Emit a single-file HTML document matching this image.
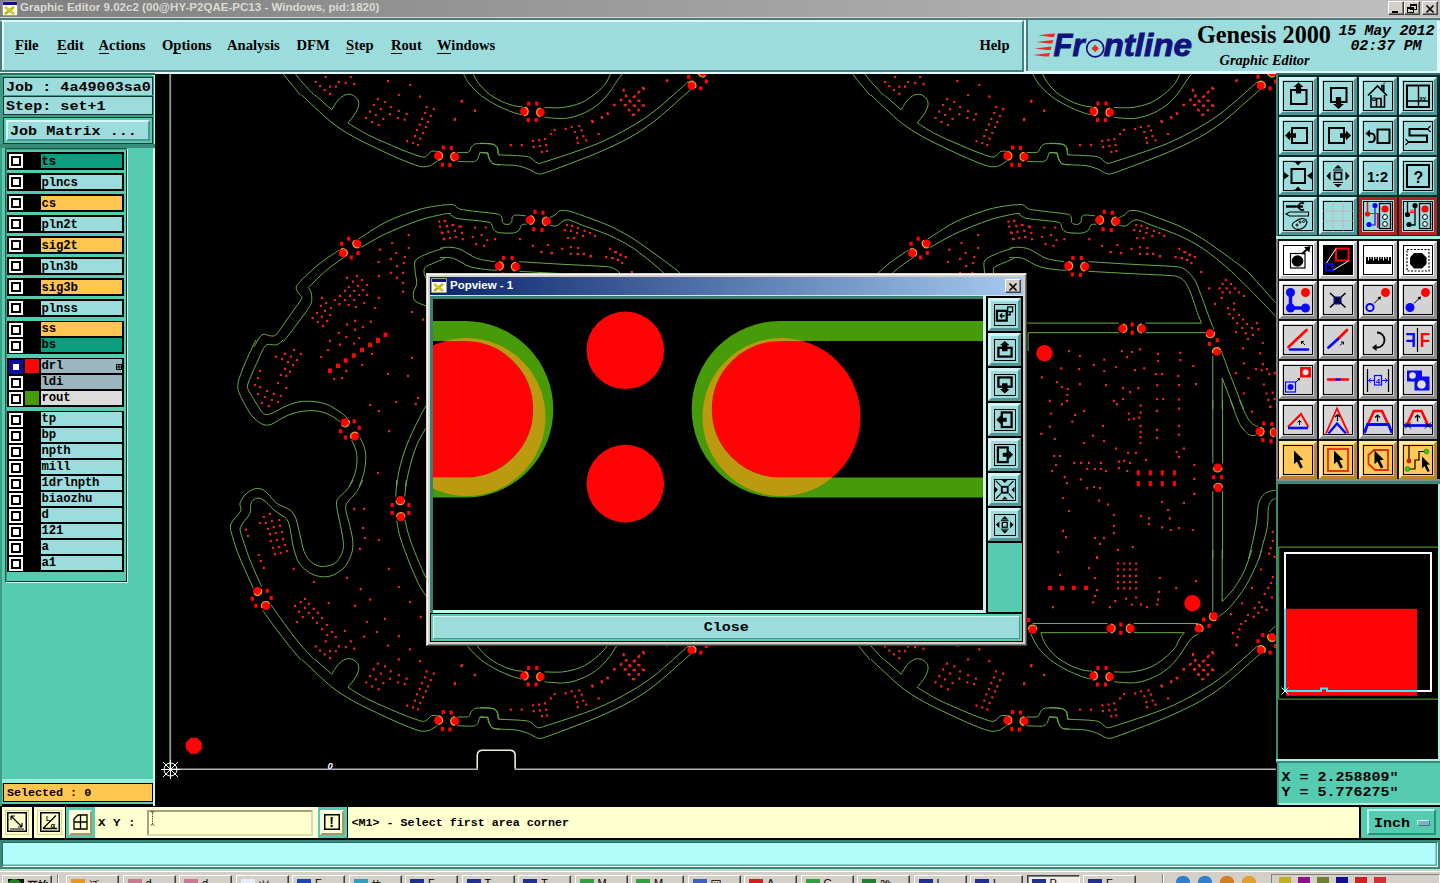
<!DOCTYPE html>
<html><head><meta charset="utf-8"><title>Graphic Editor</title><style>
*{box-sizing:border-box;margin:0;padding:0}
html,body{width:1440px;height:883px;overflow:hidden;background:#000}
body{position:relative;font-family:"Liberation Mono",monospace;font-weight:bold;color:#000}
.a{position:absolute}
.mono{font-family:"Liberation Mono",monospace;font-weight:bold;white-space:pre}
.serif{font-family:"Liberation Serif",serif;font-weight:bold}
#title{left:0;top:0;width:1440px;height:17px;background:linear-gradient(90deg,#808080,#c0c0c0)}
#title span{position:absolute;left:20px;top:1px;font:bold 11.5px "Liberation Sans",sans-serif;color:#dcdad2;white-space:pre;letter-spacing:0.03px}
.wb{position:absolute;top:1px;width:16px;height:14px;background:#d4d0c8;border:1px solid;border-color:#fff #404040 #404040 #fff;box-shadow:inset -1px -1px 0 #808080}
#menu{left:0;top:17px;width:1440px;height:57px;background:#e2fbfb;border-top:1px solid #d6d6d6}
#menu .top{position:absolute;left:0;top:0;width:1440px;height:2px;background:#4a7c7c}
#menu .in{position:absolute;left:0;top:2px;width:1024px;height:52px;background:#9ddcdc;border:2px solid;border-color:#dcf8f8 #4a8080 #4a8080 #dcf8f8;border-left:2px solid #4a7c7c;box-shadow:inset 2px 0 0 #dcf8f8}
.mi{position:absolute;top:36px;font:bold 14.6px "Liberation Serif",serif;white-space:pre}
.mi u{text-decoration:none;border-bottom:1px solid #000;padding-bottom:0}
#logo{left:1026px;top:18px;width:414px;height:53px;background:#9ddcdc}
#left{left:0;top:73px;width:155px;height:731px;background:#55cbb0}
.lbox{position:absolute;left:3px;width:150px;border:1px solid #0a3a30;background:#9ddcdc;box-shadow:0 0 0 1px #3f9c86}
.row{position:absolute;left:7px;width:117px;background:#000}
.cb{position:absolute;left:2px;top:2px;width:14px;height:14px;border:2px solid #fff;background:#000}
.cb i{position:absolute;left:2px;top:2px;width:6px;height:6px;background:#fff}
.lab{position:absolute;left:34px;right:2px;top:1.5px;bottom:1.5px;font:bold 12.3px "Liberation Mono",monospace;padding-left:0.5px;white-space:pre;letter-spacing:-0.15px}
.sw{position:absolute;left:18px;top:1.5px;width:14px;bottom:1.5px}
#rpanel{left:1276px;top:73px;width:164px;height:733px;background:#000}
.tb{position:absolute;width:38px;height:38px}
.tb .f{position:absolute;left:4px;top:4px;width:30px;height:30px;border:1px solid #000}
.tb svg{position:absolute;left:4px;top:4px;width:30px;height:30px}
.t1{background:#9ddcdc;border:3px solid;border-color:#d2f4f4 #4f9494 #4f9494 #d2f4f4}
.t1r{background:#9ddcdc;border:3px solid #b42424}
.t2{background:#fff;border:3px solid;border-color:#fff #b8b8b8 #b8b8b8 #fff}
.t3{background:#d3d3d3;border:3px solid;border-color:#fff #8c8c8c #8c8c8c #fff}
.t4{background:#ffc85a;border:3px solid;border-color:#ffe8a8 #b8862c #b8862c #ffe8a8}
.tb.t1 .f,.tb.t1r .f,.tb.t2 .f,.tb.t3 .f,.tb.t4 .f{left:1px;top:1px}
.tb.t1 svg,.tb.t1r svg,.tb.t2 svg,.tb.t3 svg,.tb.t4 svg{left:1px;top:1px}
#status{left:0;top:806.5px;width:1440px;height:32.5px;background:#000}
.sy{display:inline-block;transform:scaleY(.9);transform-origin:0 78%}
.cream{background:#ffffd0}
#msg{left:0;top:839px;width:1440px;height:30px;background:#3a8a7a}
#task{left:0;top:869px;width:1440px;height:14px;background:#d4d0c8}
.tk{position:absolute;top:5.5px;height:14px;background:#d4d0c8;border:1px solid;border-color:#fff #404040 #404040 #fff;box-shadow:inset -1px -1px 0 #808080;overflow:hidden;font:11px "Liberation Sans","Noto Sans CJK SC",sans-serif;font-weight:normal}
.tk b{position:absolute;left:4px;top:3px;width:14px;height:12px}
.tk span{position:absolute;left:22px;top:1px;white-space:pre}
#pop{left:426px;top:273px;width:601px;height:373px;background:#d4d0c8;border:1px solid;border-color:#d4d0c8 #404040 #404040 #d4d0c8;box-shadow:inset 1px 1px 0 #fff, inset -1px -1px 0 #808080}
#ptitle{position:absolute;left:3px;top:3px;width:592.5px;height:18px;background:linear-gradient(90deg,#0a246a,#a6caf0)}
#ptitle span{position:absolute;left:20px;top:2px;font:bold 11.5px "Liberation Sans",sans-serif;color:#fff;white-space:pre}
.pb{position:absolute;left:561px;width:33px;height:33px;background:#9ddcdc;border:3px solid;border-color:#d2f4f4 #4f9494 #4f9494 #d2f4f4;outline:1px solid #000}
.pb .f{position:absolute;left:3px;top:3px;width:21.5px;height:21.5px;border:1px solid #000}
.pb svg{position:absolute;left:3px;top:3px;width:21.5px;height:21.5px}
</style></head><body>
<div class="a" id="title">
<svg class="a" style="left:2px;top:1px" width="16" height="15" viewBox="0 0 16 15"><rect x="0" y="0" width="16" height="15" fill="#fffbe8" stroke="#404040" stroke-width="1"/><rect x="1" y="1" width="14" height="3" fill="#10107c"/><path d="M3 6l9 7M12 6l-9 7" stroke="#b4b414" stroke-width="2.4"/><path d="M3 6l9 7" stroke="#d8d838" stroke-width="1.2"/></svg>
<span>Graphic Editor 9.02c2 (00@HY-P2QAE-PC13 - Windows, pid:1820)</span>
<div class="wb" style="left:1388px"><svg width="14" height="12" viewBox="0 0 14 12"><rect x="3" y="8" width="6" height="2" fill="#000"/></svg></div>
<div class="wb" style="left:1404px"><svg width="14" height="12" viewBox="0 0 14 12"><g shape-rendering="crispEdges"><path d="M5.500 1.500h6v5h-6zM2.500 4.500h6v5h-6z" fill="#d4d0c8" stroke="#000" stroke-width="1"/><path d="M5 2h7M2 5h7" stroke="#000" stroke-width="2"/></g></svg></div>
<div class="wb" style="left:1422px"><svg width="14" height="12" viewBox="0 0 14 12"><path d="M3.5 2.5l7 7M10.5 2.5l-7 7" stroke="#000" stroke-width="1.7"/></svg></div>
</div>
<div class="a" id="menu"><div class="top"></div><div class="in"></div>
<span class="mi" style="left:15px;top:19px"><u>F</u>ile</span>
<span class="mi" style="left:57px;top:19px"><u>E</u>dit</span>
<span class="mi" style="left:98.5px;top:19px"><u>A</u>ctions</span>
<span class="mi" style="left:162px;top:19px">O<u>p</u>tions</span>
<span class="mi" style="left:227px;top:19px">Analysis</span>
<span class="mi" style="left:296.5px;top:19px">DFM</span>
<span class="mi" style="left:346px;top:19px"><u>S</u>tep</span>
<span class="mi" style="left:391px;top:19px"><u>R</u>out</span>
<span class="mi" style="left:437px;top:19px"><u>W</u>indows</span>
<span class="mi" style="left:979.5px;top:19px">Help</span>
</div>
<div class="a" id="logo">
<div class="a" style="left:0;top:0;width:414px;height:53px;border:solid #4a7c7c;border-width:2.700px 0 0 2.700px"></div><div class="a" style="left:411px;top:2.700px;width:3px;height:51px;background:#e2fbfb"></div>
<svg class="a" style="left:0;top:0" width="414" height="53" viewBox="1026 18 414 53">
<path d="M1038 35.3l12.5 -1.5 l4.5 -0.4 l-0.9 3.6 l-3.8 0 z" fill="#ee2a24"/>
<path d="M1036.3 41.9l12.5 -1.5 l4.5 -0.4 l-0.9 3.6 l-3.8 0 z" fill="#ee2a24"/>
<path d="M1034.6 48.4l12.5 -1.5 l4.5 -0.4 l-0.9 3.6 l-3.8 0 z" fill="#ee2a24"/>
<path d="M1032.9 54.9l12.5 -1.5 l4.5 -0.4 l-0.9 3.6 l-3.8 0 z" fill="#ee2a24"/>
<text x="1053.5" y="55.6" font-family="Liberation Sans, sans-serif" font-weight="bold" font-style="italic" font-size="30.5" fill="#12127e" stroke="#12127e" stroke-width="0.9" textLength="31" lengthAdjust="spacingAndGlyphs">Fr</text>
<circle cx="1095.2" cy="48.4" r="8.5" fill="none" stroke="#12127e" stroke-width="1.6"/>
<path d="M1095.2 44.6l3.7 3.8l-3.7 3.8l-3.7-3.8z" fill="#ee2a24"/>
<text x="1103.5" y="55.6" font-family="Liberation Sans, sans-serif" font-weight="bold" font-style="italic" font-size="30.5" fill="#12127e" stroke="#12127e" stroke-width="0.9" textLength="88.5" lengthAdjust="spacingAndGlyphs">ntline</text>
<text x="1197" y="43" font-family="Liberation Serif, serif" font-weight="bold" font-size="25.5" fill="#000" textLength="134" lengthAdjust="spacingAndGlyphs">Genesis 2000</text>
<text x="1219.5" y="64.6" font-family="Liberation Serif, serif" font-weight="bold" font-style="italic" font-size="14" fill="#000" textLength="90" lengthAdjust="spacingAndGlyphs">Graphic Editor</text>
<text x="1338.5" y="34.8" font-family="Liberation Mono, monospace" font-weight="bold" font-style="italic" font-size="15" fill="#000" textLength="96" lengthAdjust="spacing">15 May 2012</text>
<text x="1350.5" y="49.8" font-family="Liberation Mono, monospace" font-weight="bold" font-style="italic" font-size="15" fill="#000" textLength="71" lengthAdjust="spacing">02:37 PM</text>
</svg></div>
<svg class="pcb" width="1121" height="732" viewBox="155 74 1121 732" style="position:absolute;left:155px;top:74px">
<defs><g id="brd"><path d="M301.7 659.4C306.7 664 323.1 680 331.7 686.9C338.4 692.3 345.8 696.8 353.3 701.1C360.8 705.4 369.2 709.1 376.7 712.7C383.8 716.2 391.3 719.7 398.3 722.7C405.2 725.6 414.2 729.4 419.2 730.7C422.1 731.5 425.8 731.2 428.3 730.7C430.5 730.3 432.6 728.6 434.2 727.7C435.4 727 436.9 725.6 437.5 725.2 M315 659.4L331.7 674.1C332.8 672.5 336.1 666.8 338.3 664.4C340.2 662.3 342.8 660.3 345 659.4C347.1 658.6 349.6 658.4 351.7 659.1C353.8 659.8 356.3 661.8 357.5 663.6C358.6 665.2 358.9 667.4 358.7 669.4C358.4 671.6 357.2 674.6 355.8 676.9C354.1 679.9 349.3 685.6 348 687.4C351.1 689.3 360.2 695.2 366.7 698.6C373.1 702 380 704.8 386.7 707.7C393.3 710.6 400.7 713.8 406.7 716.1C411.9 718.1 419.2 720.7 422.5 721.4C423.9 721.7 425.4 721 426.7 720.2C428.2 719.3 429.6 716.4 431.7 715.7C433.7 715 437.9 716 439.2 716.1 M457.5 716.9C459.3 716.8 466 717.5 468.3 716.6C470.3 715.8 470.4 712.5 471.7 711.1C472.8 709.8 474.2 708.4 475.8 708.2C479.4 707.8 489.7 708 493.3 708.6C495.1 708.9 496.7 710.4 497.5 711.9C498.3 713.4 497.9 716.5 498.3 717.7C498.6 718.5 499.7 719.1 500 719.4 M457.5 725.7C460.1 725.8 470 726.4 473.3 726.1C474.9 725.9 476.6 724.9 477.5 723.6C478.6 722.1 479.3 718.3 479.7 717.2L488 717.2C488.3 718.4 489.1 722.6 490 724.4C490.7 725.9 491.8 727.5 493.3 728.2C495 729.1 498.9 729.2 500 729.4 M480 707.6C481.9 707.7 488.9 707.7 491.7 708.4C493.6 708.9 495.6 710 496.7 711.7C497.8 713.5 498.1 718 498.3 719.2C503.3 719.6 521.8 719.8 528.3 721.2C532 722 535 726.6 537.5 727.6C539.3 728.2 541.5 727.3 543.3 726.7C553.2 723.5 582.2 714.2 596.7 708.4C608.2 703.7 620.3 697.3 630 691.7C638.7 686.8 647.1 681.3 655 675.1C664.7 667.4 682.8 650.8 688.3 645.9 M480 716.7L487.5 717.6C487.8 718.5 488.2 721.6 489.2 723.4C490.1 725.2 491.2 727.9 493.3 728.4C497.9 729.5 510.8 729.2 516.7 730.1C520.7 730.6 524.9 732.1 528.3 733.4C531.5 734.6 534.9 737.4 537.5 738.1C539.7 738.6 542.1 738.3 544.2 737.6C554 734.1 582.4 723.5 596.7 717.6C608 712.8 620.3 707.1 630 701.7C638.7 696.9 647.1 691.2 655 685.1C663.3 678.7 673.5 669.1 680 663.4C684.7 659.3 691.8 653 694.2 650.9 M358.3 239.2C363.1 236.2 376.7 226.5 386.7 221.7C396.9 216.7 410.3 212 420 209.2C428.1 206.8 440.8 205.4 445 204.7 M360.8 247.5C365.1 245.1 377.8 237.5 386.7 233.3C396.5 228.8 410.6 223.2 420 220C427.6 217.4 438.2 215.3 443.3 214.2C445.8 213.6 449.6 213.5 450.8 213.3 M339.2 250C336 252.2 326 258.6 320 263.3C314.1 268 307.3 274.4 303.3 278.3C300.8 280.9 297.2 284.3 296.3 286.7C295.6 288.6 297.1 290.8 298 292.5C298.9 294.1 301.2 295.4 301.7 296.7C302.1 297.7 301.5 299 300.8 300C298.3 303.9 290.8 314.2 286.7 320C283.1 325 278.6 332.4 275.8 335C274.4 336.4 271.9 336 270 335.8C268.1 335.7 265.8 334 264.2 334.2C262.6 334.3 261 335.4 260 336.7C258.3 338.7 255.1 345 254.2 346.7 M345 256.7C341.9 258.9 332.5 265.1 326.7 270C320.6 275.1 311.4 284.6 308.3 287.5C308.8 288.5 311 291.2 311.3 293.3C311.8 296.1 312.4 300.9 310.8 304.2C308.1 309.7 299.6 320.4 295 326.7C291.3 331.8 285.3 339.2 283.3 341.7 M443.3 248.3C440.8 249.2 432.9 251.4 428.3 253.3C424 255.2 418.1 257.2 415.8 260C413.7 262.6 414.9 266.7 415 270C415.1 273.9 416.9 279.4 416.7 283.3C416.4 286.8 413.6 290.4 413.3 293.3C413.1 295.9 413.2 299 415 300.8C417.1 302.9 424 305 425.8 305.8 M445 258.3C443.1 259.2 436.7 261.8 433.3 263.3C430.5 264.6 426.5 265.8 425 267.5C423.7 268.9 424 271.5 424.2 273.3C424.3 275.1 425.6 277.5 425.8 278.3 M445 205.2C446.4 205.1 450.8 204 453.3 204.7C455.8 205.3 457.4 208.6 460 209.2C467.5 210.8 491.4 212.9 498.3 214.2C499.7 214.4 501 215.4 501.7 216.7C502.4 218.1 501.9 221.2 502.5 222.5C502.9 223.4 504 223.9 505 224.2C506.1 224.4 508.1 224.6 509.2 224.2C510.3 223.8 511.2 222.7 511.7 221.7C512.2 220.4 511.8 217.8 512.5 216.7C513.2 215.6 514.6 215.1 515.8 215C518.1 214.9 524.2 215.7 525.8 215.8 M449.2 213.8C450.4 214.6 453.8 217.7 456.7 218.3C463.5 219.8 483.9 220.7 490 222.5C492.4 223.2 491.9 227.5 493.3 229.2C494.6 230.7 496.4 232.1 498.3 232.5C501.7 233.1 509.9 233.4 513.3 233C515.5 232.7 517.8 231.3 519.2 230C520.5 228.7 520.4 226 521.7 225C522.9 224 525.8 224.3 526.7 224.2 M550 217.5C550.8 217.1 553.4 216 555 215C556.7 213.9 557.9 211.3 560 210.8C562.5 210.2 566.8 210.5 570 211.3C575 212.6 583.4 215.9 590 218.3C596.8 220.8 604 223.2 610.7 226.3C617.9 229.8 626 234.3 633.3 238.8C640.9 243.6 648.5 249.3 656 254.7C663.6 260.1 674.9 268.8 678.7 271.7 M550 225.3C551.1 225.4 554.6 226.6 556.7 225.8C559.4 224.9 562.8 219.8 566.7 219.7C570.8 219.5 576.7 223.2 581.7 225C589 227.7 602.1 232.1 610.7 236C618.5 239.5 626.2 243.6 633.3 248.3C640.9 253.3 650.4 261.4 656 266C659.7 269.1 664.9 274.2 666.7 275.8 M440 248.3C441.4 248.1 445.5 247 448.3 247.2C451.7 247.3 456.3 247.7 460 249.2C464.7 251 470.8 256.2 476.7 258.3C482.5 260.4 491.9 261.1 495 261.7 M440 257.5C442.2 257.6 449.1 257 453.3 258.3C458.3 259.9 464.1 264.8 470 266.7C476.1 268.6 485.3 269.4 490 270C492.8 270.3 496.9 270 498.3 270 M255.8 340C254 343.9 247.9 356.4 245 363.3C242.5 369.3 239.4 376.9 238.3 381.7C237.6 384.9 237.5 388.5 238.7 391.7C240.6 396.9 246.7 408.3 250 413.3C252.2 416.6 255.8 419.7 258.3 421.7C260.3 423.2 262.8 424.6 265 425C267.2 425.4 269.6 425 271.7 424.2C275.3 422.6 281.9 417.9 286.7 415.8C290.9 414 295.4 412.5 300 411.7C304.7 410.8 310.3 410.4 315 410.8C319.6 411.2 324.2 412.4 328.3 414.2C332.5 416 338.1 420.4 340 421.7 M283.3 340C282.2 340.8 279.3 343.9 276.7 344.7C273.8 345.6 268.5 343 265.8 345.5C262.5 348.6 259.5 357.3 256.7 363.3C253.6 369.9 248.9 380.6 247.5 385C247 386.6 247.5 388.5 248.3 390C250.7 394.4 258.8 407.6 261.7 411.7C262.7 413.1 264.2 414.4 265.8 414.7C267.5 414.9 269.8 414.1 271.7 413.3C275.1 411.9 281.9 407.8 286.7 405.8C291 404.1 295.4 402.3 300 401.7C304.7 401 310.3 401.1 315 401.7C319.5 402.2 324.1 403.2 328.3 405C332.8 406.9 338.3 411 341.7 413.3C344.1 415 347.2 418.2 348.3 419.2 M351.7 440C352.4 441.7 354.9 446.7 355.8 450C356.7 453.2 357.1 456.6 357 460C356.9 463.9 356.3 469 355 473.3C353.7 477.8 350.1 484.4 349.2 486.7 M360 437.5C360.7 439 363.2 443.5 364.2 446.7C365.1 449.9 365.8 453.3 365.8 456.7C365.8 460.8 365.3 466.8 364.2 471.7C363.1 476.7 360 484.2 359.2 486.7 M425.8 405.8C424 409.3 418.3 419.6 415 426.7C411.5 434 407.6 442.8 405 450C402.6 456.5 400.6 463.9 399.2 470C397.9 475.5 397.1 483.9 396.7 486.7 M425.8 428.3C424.4 430.8 419.8 438.1 417.5 443.3C415.1 448.6 413.3 454.4 411.7 460C410 465.5 408.5 472.2 407.5 476.7C406.8 480 406.1 485 405.8 486.7 M353.3 480C352.2 481.7 349.2 486.9 346.7 490C344 493.2 339.2 496.4 337.5 499.2C336.2 501.3 336.4 504.2 336.7 506.7C337.1 510.7 338.9 517.8 340 523.3C341.1 529.2 342.9 536.9 343.3 541.7C343.6 545 343.6 548.5 342.5 551.7C341.4 555 339 559.3 336.7 561.7C334.5 563.9 331.4 565.1 328.3 565.8C325.3 566.5 321.4 566.7 318.3 565.8C315.3 565 312.3 563.1 310 560.8C307.6 558.5 305.5 555 304.2 551.7C302.5 547.4 301.4 540.6 300 535C298.6 529.4 297.5 522.5 295.8 518.3C294.6 515.2 292.7 512.1 290 510C286.8 507.5 280.3 506 276.7 503.3C273.3 500.9 270.8 496.5 268.3 494.2C266.3 492.3 264.2 490 261.7 489.2C259.2 488.3 256 488.2 253.3 489.2C250.6 490.1 247.2 492.6 245 495C242.8 497.4 240.7 500.7 240 503.3C239.4 505.8 241.8 508.5 240.8 510.8C239.3 514.3 232.2 519.9 230.8 524.2C229.5 528.2 231.4 532.6 232.5 536.7C234 542.4 237.1 551.2 240 558.3C243.5 566.9 251.1 583.3 253.3 588.3 M363 480C361.9 481.9 359.2 488 356.7 491.7C353.9 495.6 348.5 500.3 346.7 503.3C345.5 505.3 345.5 507.8 345.8 510C346.4 513.9 348.8 521.4 350 526.7C351.1 531.6 352.6 537.2 352.8 541.7C353.1 545.6 352.8 549.6 351.7 553.3C350.4 557.5 347.8 563.2 345 566.7C342.4 569.9 338.1 572.5 335 574.2C332.5 575.6 329.6 576.4 326.7 576.7C323.6 576.9 319.9 576.8 316.7 575.8C313.3 574.9 309.6 573.1 306.7 570.8C303.6 568.5 300.3 565.3 298.3 561.7C296.1 557.6 294.6 551.8 293.3 546.7C291.9 541.1 291.1 532.9 290 528.3C289.2 525.2 288.8 521.6 286.7 519.2C284.2 516.2 278.3 513.6 275 510.8C272 508.3 269.2 504.6 266.7 502.5C264.7 500.8 262.1 498.9 260 498.3C258.1 497.8 255.7 498.2 254.2 499.2C252.6 500.1 251.4 502.2 250.8 504.2C250.1 506.5 251.3 510.5 250 513.3C248.2 517.2 241.6 523.3 240.3 527.5C239.3 531 241.5 534.8 242.5 538.3C244.1 543.8 247.2 552.9 250 560C253.2 568.1 259.7 582.2 261.7 586.7 M262.7 610.3C264.8 613.3 271.1 622.3 275.3 628C279.4 633.5 283.8 639 288 644.3C292.2 649.6 298.6 657.2 300.7 659.8 M270.8 604.5C273.1 607.7 279.7 617.2 284.3 623.5C289 629.9 293.8 636.6 298.8 642.7C303.7 648.6 311.8 657 314.3 659.8 M396.7 480L395.8 496.7 M406.3 480L404.7 496.7 M396.7 520.8C397.2 523.5 398.5 531.5 400 536.7C401.9 543.2 405.3 552.3 408.3 560C411.4 567.8 415.4 577.4 418.3 583.3C420.5 587.7 424.6 593.8 425.8 595.8 M405 520C405.7 522.8 407.4 531.2 409.2 536.7C411.1 542.8 414 550.1 416.7 556.7C419.4 563.5 424.3 574 425.8 577.5 M519.3 261.7C525.9 262.1 545.8 263.3 559 264.1C573.5 264.9 597 265.9 606 266.6C608.4 266.8 611 267 613.2 268.1C615.6 269.2 618.4 271.3 620.4 273.5C622.7 275.9 625.1 279.2 626.7 282.5C628.8 286.7 631 293.3 633.1 298.8C635.3 304.8 638.3 313.5 640.3 318.6C641.7 322.3 644 327.6 644.8 329.4 M519.3 271.3C525.9 271.7 545.8 272.8 559 273.5C573.2 274.2 595.4 275.1 604.2 275.8C606.7 276 609.3 276.7 611.4 278C613.5 279.2 615.4 281.2 616.8 283.4C618.6 286.3 620.7 291.1 622.2 295.1C624 299.8 626 306.7 627.6 311.4C629 315.3 631.4 321.2 632.2 323.1 M457.9 323.1L549.6 323.1 M576.2 323.1L632.2 323.1 M458.8 351.1L458.8 332.7L549.6 332.7 M576.2 332.7L636.7 332.7 M643.5 355.6L643.5 408.9 M652 351.1C653.4 354.7 657.4 365.6 660.1 372.8C663.6 381.8 670.4 399.3 672.8 405.3C673.3 406.5 674.3 408.3 674.6 408.9 M652.9 408.9L652.9 378.2L664.7 408.9 M678.6 271.7C682.9 276.5 700.1 295.7 704.7 300.9C705.3 301.5 705.9 302.4 706.2 302.7 M667.4 276.7C669.3 278.5 675.1 283.8 678.7 287.6C685 293.9 700.2 309.8 704.7 314.6C705.3 315.2 705.9 316.1 706.2 316.4 M643.5 400L643.5 463.2 M653.3 400L653.3 463.2 M643.5 491.2L643.5 558.9 M653.3 491.2L653.3 558.9 M661 400C662.6 403.9 667.5 418.2 670.1 423.5C671.6 426.6 674.6 429.6 676.4 431.6C677.7 433 679.1 434.6 680.9 435.2C682.7 435.8 686.2 435.2 687.2 435.2 M670.1 400C671.3 402.7 675.2 412.3 677.3 416.2C678.7 418.9 680.8 421.7 682.7 423.5C684.5 425 688 426.2 689 426.7 M706.2 490.3C704.8 490.6 700.3 491 698.1 492.1C695.9 493.1 694 494.7 692.6 496.6C691.1 498.7 689.6 501.8 689 504.7C688.1 509.1 688.1 516.8 687.2 522.8C686.3 528.8 685 534.8 683.6 540.8C682.3 546.9 679.9 555.9 679.1 558.9 M706.2 498.4C705.4 498.9 702.7 499.7 701.7 501.1C700.5 502.8 699.3 505.8 699 508.3C698.4 512.5 699 520.4 698.1 526.4C697.2 532.4 694.9 539 693.5 544.4C692.3 549.3 690.5 556.5 689.9 558.9 M643.5 550L643.5 611.4 M682.7 550C681.4 553.6 677.7 565 674.6 571.7C671.6 578 667.4 584.8 663.8 589.7C660.6 594 654.7 599.5 652.9 601.5L652.9 550 M649.3 616.8C651.1 615.3 657 611.3 660.1 607.8C664.7 602.7 671.9 593.3 676.4 586.1C680.7 579.3 684.5 570.5 687.2 564.4C689.3 559.8 691.7 552.4 692.6 550 M463.3 623.5L538.3 623.5 M564.5 623.5L628.5 623.5 M471.5 632.7L538.3 632.7 M564.5 632.7L615 632.7 M461.5 634C462.7 636.2 465.7 643.4 468.8 647.5C472.1 651.9 476.7 656.5 481.4 660.1C486.2 663.9 492.5 667.4 497.6 670.1C502.3 672.5 508.2 674.9 512.1 676.4C515 677.5 519.6 678.6 521.1 679.1 M471.5 632.7C472.2 634.6 473.8 640.5 476 643.9C478.5 647.9 482.6 652.9 486.8 656.5C491 660.1 496.7 663.3 501.3 665.6C505.3 667.6 510.3 669.1 513.9 670.1C516.8 670.9 521.4 671.1 522.9 671.3 M544.6 671.9C547.6 671.9 556.7 672.6 562.6 671.9C568.7 671.1 575.3 669.6 580.7 667.4C585.9 665.2 590.9 661.6 595.1 658.3C599.2 655.2 603.4 650.8 606 647.5C608 644.8 609 640.9 610.5 638.5C611.8 636.4 614.3 633.7 615 632.7 M544.6 681.8C548.2 682 559.6 683.5 566.3 682.7C572.5 682 578.9 679.7 584.3 677.3C589.5 675 594.5 671.7 598.8 668.3C602.9 664.9 606.6 660.3 609.6 656.5C612.3 653.1 614.7 648.7 616.8 645.7C618.5 643.2 620.3 640.4 622.2 638.5C624.1 636.6 627.5 634.7 628.5 634 M706.2 625.8L699.9 632.2" fill="none" stroke="#6cac48" stroke-width="1" stroke-linejoin="round"/>
<path d="M324.7 640.3h2.2v2.2h-2.2zM349.7 640.3h2.2v2.2h-2.2zM314.7 645.3h2.2v2.2h-2.2zM318.9 649.5h2.2v2.2h-2.2zM323.6 653.3h2.2v2.2h-2.2zM328.9 657.1h2.2v2.2h-2.2zM328.9 650h2.2v2.2h-2.2zM334.7 650h2.2v2.2h-2.2zM337.7 645.3h2.2v2.2h-2.2zM344.7 646.1h2.2v2.2h-2.2zM353.1 647.5h2.2v2.2h-2.2zM386.9 644.5h2.2v2.2h-2.2zM408.9 648.3h2.2v2.2h-2.2zM397.7 658.3h2.2v2.2h-2.2zM418.9 660h2.2v2.2h-2.2zM376.7 662.5h2.2v2.2h-2.2zM383.9 665.3h2.2v2.2h-2.2zM372.7 668.3h2.2v2.2h-2.2zM379.7 672.5h2.2v2.2h-2.2zM389.7 670.3h2.2v2.2h-2.2zM368.9 675h2.2v2.2h-2.2zM374.7 678.3h2.2v2.2h-2.2zM382.2 682.1h2.2v2.2h-2.2zM388.9 677.5h2.2v2.2h-2.2zM397.7 674.1h2.2v2.2h-2.2zM405.6 677.5h2.2v2.2h-2.2zM365.1 681.3h2.2v2.2h-2.2zM370.9 685.3h2.2v2.2h-2.2zM377.6 688.3h2.2v2.2h-2.2zM396.9 681.3h2.2v2.2h-2.2zM403.6 683h2.2v2.2h-2.2zM425.6 670.3h2.2v2.2h-2.2zM432.7 672.5h2.2v2.2h-2.2zM423.9 676.3h2.2v2.2h-2.2zM429.7 679.1h2.2v2.2h-2.2zM420.9 682.1h2.2v2.2h-2.2zM426.9 685.3h2.2v2.2h-2.2zM418.6 688h2.2v2.2h-2.2zM424.7 690.3h2.2v2.2h-2.2zM415.9 693.3h2.2v2.2h-2.2zM421.9 696.3h2.2v2.2h-2.2zM413.9 699.5h2.2v2.2h-2.2zM419.2 702h2.2v2.2h-2.2zM406.1 704.5h2.2v2.2h-2.2zM411.9 706.3h2.2v2.2h-2.2zM416.9 708.3h2.2v2.2h-2.2zM461.1 664.1h2.2v2.2h-2.2zM473.9 674.1h2.2v2.2h-2.2zM453.9 682.1h2.2v2.2h-2.2zM509.7 708.5h2.2v2.2h-2.2zM520.6 708.5h2.2v2.2h-2.2zM531.9 704.3h2.2v2.2h-2.2zM538.1 703.5h2.2v2.2h-2.2zM543.9 702.3h2.2v2.2h-2.2zM532.6 710.1h2.2v2.2h-2.2zM538.9 709.3h2.2v2.2h-2.2zM545.1 708.5h2.2v2.2h-2.2zM540.9 715.1h2.2v2.2h-2.2zM545.9 714.3h2.2v2.2h-2.2zM549.7 697.3h2.2v2.2h-2.2zM553.6 693.1h2.2v2.2h-2.2zM564.7 692.3h2.2v2.2h-2.2zM570.6 690.3h2.2v2.2h-2.2zM578.1 689.3h2.2v2.2h-2.2zM573.9 695.3h2.2v2.2h-2.2zM580.6 693.6h2.2v2.2h-2.2zM575.9 701.1h2.2v2.2h-2.2zM582.2 699.5h2.2v2.2h-2.2zM576.7 706.1h2.2v2.2h-2.2zM585.1 703.6h2.2v2.2h-2.2zM590.9 684.5h2.2v2.2h-2.2zM597.6 697.3h2.2v2.2h-2.2zM600.6 680.3h2.2v2.2h-2.2zM606.9 677.3h2.2v2.2h-2.2zM613.1 668.5h2.2v2.2h-2.2zM622.6 653.1h2.2v2.2h-2.2zM625.2 659h2.2v2.2h-2.2zM619.7 663.5h2.2v2.2h-2.2zM623.6 668.5h2.2v2.2h-2.2zM628.4 664h2.2v2.2h-2.2zM632.6 660.3h2.2v2.2h-2.2zM638.1 654.8h2.2v2.2h-2.2zM641.9 651.1h2.2v2.2h-2.2zM627.7 673.1h2.2v2.2h-2.2zM632.6 669h2.2v2.2h-2.2zM637.2 664h2.2v2.2h-2.2zM641.7 668.6h2.2v2.2h-2.2zM637.6 673.1h2.2v2.2h-2.2zM631.9 678.1h2.2v2.2h-2.2zM665.9 644.3h2.2v2.2h-2.2zM438.1 220.6h2.2v2.2h-2.2zM443.9 219.7h2.2v2.2h-2.2zM438.9 225.6h2.2v2.2h-2.2zM445.9 224.7h2.2v2.2h-2.2zM452.2 223.9h2.2v2.2h-2.2zM441.4 231.9h2.2v2.2h-2.2zM447.2 230.6h2.2v2.2h-2.2zM453.9 229.7h2.2v2.2h-2.2zM443.1 237.7h2.2v2.2h-2.2zM448.9 236.9h2.2v2.2h-2.2zM454.7 235.9h2.2v2.2h-2.2zM458.4 225.6h2.2v2.2h-2.2zM407.7 233.9h2.2v2.2h-2.2zM407.7 246.9h2.2v2.2h-2.2zM391.1 241.9h2.2v2.2h-2.2zM378.9 248.6h2.2v2.2h-2.2zM395.1 251.9h2.2v2.2h-2.2zM403.9 255.9h2.2v2.2h-2.2zM389.7 257.7h2.2v2.2h-2.2zM402.7 261.9h2.2v2.2h-2.2zM377.6 260.9h2.2v2.2h-2.2zM395.9 265.1h2.2v2.2h-2.2zM389.7 271.7h2.2v2.2h-2.2zM401.9 271.7h2.2v2.2h-2.2zM377.7 274.7h2.2v2.2h-2.2zM395.9 276.7h2.2v2.2h-2.2zM401.9 281.7h2.2v2.2h-2.2zM401.9 290.6h2.2v2.2h-2.2zM377.7 296.7h2.2v2.2h-2.2zM373.9 306.9h2.2v2.2h-2.2zM410.9 310.9h2.2v2.2h-2.2zM421.9 318.6h2.2v2.2h-2.2zM369.7 320.6h2.2v2.2h-2.2zM345.9 276.7h2.2v2.2h-2.2zM355.9 274.7h2.2v2.2h-2.2zM351.9 280.6h2.2v2.2h-2.2zM360.9 278.9h2.2v2.2h-2.2zM347.7 285.9h2.2v2.2h-2.2zM356.9 284.7h2.2v2.2h-2.2zM365.9 283.9h2.2v2.2h-2.2zM343.9 289.7h2.2v2.2h-2.2zM353.1 289.7h2.2v2.2h-2.2zM361.9 288.9h2.2v2.2h-2.2zM338.9 294.7h2.2v2.2h-2.2zM348.9 294.7h2.2v2.2h-2.2zM358.1 293.9h2.2v2.2h-2.2zM365.9 293.9h2.2v2.2h-2.2zM333.9 298.9h2.2v2.2h-2.2zM343.9 298.9h2.2v2.2h-2.2zM353.1 298.9h2.2v2.2h-2.2zM338.1 303.1h2.2v2.2h-2.2zM347.7 303.9h2.2v2.2h-2.2zM363.1 301.9h2.2v2.2h-2.2zM354.7 305.9h2.2v2.2h-2.2zM320.9 296.7h2.2v2.2h-2.2zM325.1 301.9h2.2v2.2h-2.2zM319.7 304.7h2.2v2.2h-2.2zM329.7 306.9h2.2v2.2h-2.2zM323.9 309.7h2.2v2.2h-2.2zM315.9 311.9h2.2v2.2h-2.2zM328.9 313.9h2.2v2.2h-2.2zM320.9 315.6h2.2v2.2h-2.2zM311.7 316.9h2.2v2.2h-2.2zM325.9 319.7h2.2v2.2h-2.2zM316.7 320.9h2.2v2.2h-2.2zM321.9 324.7h2.2v2.2h-2.2zM353.9 319.7h2.2v2.2h-2.2zM345.9 323.6h2.2v2.2h-2.2zM361.7 325.9h2.2v2.2h-2.2zM353.9 328.6h2.2v2.2h-2.2zM337.7 331.7h2.2v2.2h-2.2zM345.1 335.9h2.2v2.2h-2.2zM358.1 336.9h2.2v2.2h-2.2zM328.9 339.7h2.2v2.2h-2.2zM353.1 342.6h2.2v2.2h-2.2zM338.9 343.9h2.2v2.2h-2.2zM443.6 219.7h2.2v2.2h-2.2zM451.4 223.9h2.2v2.2h-2.2zM459.7 225.6h2.2v2.2h-2.2zM445.9 225.1h2.2v2.2h-2.2zM453.9 229.7h2.2v2.2h-2.2zM440.6 231.4h2.2v2.2h-2.2zM447.2 230.9h2.2v2.2h-2.2zM460.9 231.7h2.2v2.2h-2.2zM455.1 235.9h2.2v2.2h-2.2zM448.9 236.9h2.2v2.2h-2.2zM442.6 238.1h2.2v2.2h-2.2zM461.7 238.1h2.2v2.2h-2.2zM473.9 226.4h2.2v2.2h-2.2zM484.7 226.4h2.2v2.2h-2.2zM480.6 233.9h2.2v2.2h-2.2zM471.7 235.9h2.2v2.2h-2.2zM486.1 238.9h2.2v2.2h-2.2zM493.9 238.1h2.2v2.2h-2.2zM475.1 243.1h2.2v2.2h-2.2zM483.1 244.7h2.2v2.2h-2.2zM518.9 238.1h2.2v2.2h-2.2zM531.7 244.7h2.2v2.2h-2.2zM546.9 243.9h2.2v2.2h-2.2zM540.1 250.9h2.2v2.2h-2.2zM550.9 251.9h2.2v2.2h-2.2zM561.1 247.7h2.2v2.2h-2.2zM565.9 223.9h2.2v2.2h-2.2zM571.1 224.7h2.2v2.2h-2.2zM563.9 228.9h2.2v2.2h-2.2zM569.7 229.7h2.2v2.2h-2.2zM576.9 226.9h2.2v2.2h-2.2zM575.9 231.9h2.2v2.2h-2.2zM583.6 229.7h2.2v2.2h-2.2zM581.9 234.7h2.2v2.2h-2.2zM588.9 231.9h2.2v2.2h-2.2zM593.9 234.7h2.2v2.2h-2.2zM566.9 236.9h2.2v2.2h-2.2zM573.1 236.9h2.2v2.2h-2.2zM569.7 246.1h2.2v2.2h-2.2zM576.9 246.9h2.2v2.2h-2.2zM569.7 252.7h2.2v2.2h-2.2zM576.9 252.7h2.2v2.2h-2.2zM582.7 252.7h2.2v2.2h-2.2zM589.7 254.7h2.2v2.2h-2.2zM608.9 247.7h2.2v2.2h-2.2zM613.9 250.9h2.2v2.2h-2.2zM619.7 253.6h2.2v2.2h-2.2zM605.1 256.1h2.2v2.2h-2.2zM611.1 256.9h2.2v2.2h-2.2zM616.9 258.9h2.2v2.2h-2.2zM624.7 256.1h2.2v2.2h-2.2zM620.9 261.9h2.2v2.2h-2.2zM630.9 270.9h2.2v2.2h-2.2zM293.1 348.9h2.2v2.2h-2.2zM283.9 352.7h2.2v2.2h-2.2zM299.7 352.7h2.2v2.2h-2.2zM274.7 355.6h2.2v2.2h-2.2zM289.7 355.6h2.2v2.2h-2.2zM280.9 358.1h2.2v2.2h-2.2zM295.9 358.9h2.2v2.2h-2.2zM286.9 361.1h2.2v2.2h-2.2zM291.9 363.9h2.2v2.2h-2.2zM283.9 367.7h2.2v2.2h-2.2zM258.9 369.7h2.2v2.2h-2.2zM288.9 370.6h2.2v2.2h-2.2zM279.7 373.9h2.2v2.2h-2.2zM285.2 374.7h2.2v2.2h-2.2zM256.9 376.9h2.2v2.2h-2.2zM276.9 381.9h2.2v2.2h-2.2zM253.9 383.9h2.2v2.2h-2.2zM258.9 386.1h2.2v2.2h-2.2zM285.2 386.9h2.2v2.2h-2.2zM265.9 389.7h2.2v2.2h-2.2zM256.9 392.7h2.2v2.2h-2.2zM272.7 392.7h2.2v2.2h-2.2zM279.7 394.7h2.2v2.2h-2.2zM263.9 395.9h2.2v2.2h-2.2zM270.9 398.9h2.2v2.2h-2.2zM276.9 400.9h2.2v2.2h-2.2zM260.9 401.9h2.2v2.2h-2.2zM267.7 405.1h2.2v2.2h-2.2zM328.9 339.7h2.2v2.2h-2.2zM338.9 343.6h2.2v2.2h-2.2zM353.1 342.6h2.2v2.2h-2.2zM326.9 348.9h2.2v2.2h-2.2zM320.1 355.9h2.2v2.2h-2.2zM370.9 352.7h2.2v2.2h-2.2zM360.9 363.9h2.2v2.2h-2.2zM345.1 369.7h2.2v2.2h-2.2zM333.1 377.7h2.2v2.2h-2.2zM341.1 376.9h2.2v2.2h-2.2zM410.9 356.7h2.2v2.2h-2.2zM386.9 372.7h2.2v2.2h-2.2zM406.9 374.7h2.2v2.2h-2.2zM416.9 396.9h2.2v2.2h-2.2zM395.1 400.9h2.2v2.2h-2.2zM414.7 402.7h2.2v2.2h-2.2zM368.9 403.9h2.2v2.2h-2.2zM377.7 410.1h2.2v2.2h-2.2zM388.1 430.1h2.2v2.2h-2.2zM376.9 471.9h2.2v2.2h-2.2zM268.9 512.7h2.2v2.2h-2.2zM262.7 515.9h2.2v2.2h-2.2zM270.9 519.7h2.2v2.2h-2.2zM278.1 518.9h2.2v2.2h-2.2zM258.9 521.9h2.2v2.2h-2.2zM264.7 521.9h2.2v2.2h-2.2zM272.7 526.1h2.2v2.2h-2.2zM278.9 524.7h2.2v2.2h-2.2zM266.9 527.7h2.2v2.2h-2.2zM280.9 530.9h2.2v2.2h-2.2zM274.7 531.9h2.2v2.2h-2.2zM268.9 533.1h2.2v2.2h-2.2zM244.7 528.6h2.2v2.2h-2.2zM246.9 534.7h2.2v2.2h-2.2zM281.9 537.7h2.2v2.2h-2.2zM275.9 538.9h2.2v2.2h-2.2zM269.7 540.1h2.2v2.2h-2.2zM283.9 543.9h2.2v2.2h-2.2zM277.7 545.9h2.2v2.2h-2.2zM271.9 546.9h2.2v2.2h-2.2zM285.9 550.1h2.2v2.2h-2.2zM279.7 551.7h2.2v2.2h-2.2zM273.9 553.1h2.2v2.2h-2.2zM257.7 553.9h2.2v2.2h-2.2zM259.7 560.1h2.2v2.2h-2.2zM262.7 566.7h2.2v2.2h-2.2zM292.7 567.7h2.2v2.2h-2.2zM312.7 580.9h2.2v2.2h-2.2zM345.9 576.7h2.2v2.2h-2.2zM359.7 588.1h2.2v2.2h-2.2zM353.1 507.7h2.2v2.2h-2.2zM363.1 507.7h2.2v2.2h-2.2zM361.9 526.9h2.2v2.2h-2.2zM363.9 536.9h2.2v2.2h-2.2zM377.7 538.9h2.2v2.2h-2.2zM358.9 547.7h2.2v2.2h-2.2zM387.7 567.7h2.2v2.2h-2.2zM397.7 585.9h2.2v2.2h-2.2zM368.9 598.6h2.2v2.2h-2.2zM408.9 600.9h2.2v2.2h-2.2zM353.9 604.7h2.2v2.2h-2.2zM419.7 615.9h2.2v2.2h-2.2zM383.9 617.7h2.2v2.2h-2.2zM365.9 620.9h2.2v2.2h-2.2zM303.9 597.7h2.2v2.2h-2.2zM299.7 600.9h2.2v2.2h-2.2zM307.7 602.7h2.2v2.2h-2.2zM293.9 604.7h2.2v2.2h-2.2zM303.9 606.7h2.2v2.2h-2.2zM312.7 607.7h2.2v2.2h-2.2zM297.7 610.6h2.2v2.2h-2.2zM307.7 611.7h2.2v2.2h-2.2zM316.7 611.7h2.2v2.2h-2.2zM301.7 615.9h2.2v2.2h-2.2zM311.7 616.9h2.2v2.2h-2.2zM320.9 616.9h2.2v2.2h-2.2zM295.9 620.9h2.2v2.2h-2.2zM315.9 621.7h2.2v2.2h-2.2zM325.9 623.9h2.2v2.2h-2.2zM327.7 601.9h2.2v2.2h-2.2zM320.9 627.7h2.2v2.2h-2.2zM330.9 630.9h2.2v2.2h-2.2zM343.9 629.7h2.2v2.2h-2.2zM375.9 630.9h2.2v2.2h-2.2zM325.9 633.9h2.2v2.2h-2.2zM334.7 635.9h2.2v2.2h-2.2zM363.1 635.6h2.2v2.2h-2.2zM397.7 635.1h2.2v2.2h-2.2zM540.4 251.1h2.2v2.2h-2.2zM550.4 252h2.2v2.2h-2.2zM569.7 252.9h2.2v2.2h-2.2zM576.5 252.9h2.2v2.2h-2.2zM582.9 252.9h2.2v2.2h-2.2zM589.5 255.2h2.2v2.2h-2.2zM605.2 256.1h2.2v2.2h-2.2zM611.6 257h2.2v2.2h-2.2zM614.8 251.1h2.2v2.2h-2.2zM619.3 254h2.2v2.2h-2.2zM624.4 256.1h2.2v2.2h-2.2zM616.6 258.8h2.2v2.2h-2.2zM621.1 261.9h2.2v2.2h-2.2zM630.7 270.9h2.2v2.2h-2.2zM655.4 278.7h2.2v2.2h-2.2zM652.2 282.8h2.2v2.2h-2.2zM660.5 282.8h2.2v2.2h-2.2zM649.1 287.2h2.2v2.2h-2.2zM656.3 287.2h2.2v2.2h-2.2zM664.5 287.2h2.2v2.2h-2.2zM638.8 287.2h2.2v2.2h-2.2zM652.2 291.3h2.2v2.2h-2.2zM659.4 291.3h2.2v2.2h-2.2zM668.6 291.3h2.2v2.2h-2.2zM673.5 294.9h2.2v2.2h-2.2zM651.3 296.7h2.2v2.2h-2.2zM663.6 302.2h2.2v2.2h-2.2zM644.6 302.7h2.2v2.2h-2.2zM657.6 307h2.2v2.2h-2.2zM663.6 308.5h2.2v2.2h-2.2zM659 313h2.2v2.2h-2.2zM668.6 313.9h2.2v2.2h-2.2zM662.7 317.1h2.2v2.2h-2.2zM672.6 318.4h2.2v2.2h-2.2zM666.8 322h2.2v2.2h-2.2zM676.6 322.9h2.2v2.2h-2.2zM686.7 322h2.2v2.2h-2.2zM671.7 326.9h2.2v2.2h-2.2zM681.6 326.9h2.2v2.2h-2.2zM687.9 328.3h2.2v2.2h-2.2zM665.7 331.1h2.2v2.2h-2.2zM675.3 332h2.2v2.2h-2.2zM682.5 333.8h2.2v2.2h-2.2zM677.5 337.7h2.2v2.2h-2.2zM692.4 341.9h2.2v2.2h-2.2zM672.6 347.3h2.2v2.2h-2.2zM689.7 352.2h2.2v2.2h-2.2zM673.5 362.3h2.2v2.2h-2.2zM692.4 363h2.2v2.2h-2.2zM685.6 368.1h2.2v2.2h-2.2zM691.2 369h2.2v2.2h-2.2zM696.6 368.1h2.2v2.2h-2.2zM665.4 372h2.2v2.2h-2.2zM698.8 373.1h2.2v2.2h-2.2zM704.2 372h2.2v2.2h-2.2zM678 377.1h2.2v2.2h-2.2zM693.4 383.4h2.2v2.2h-2.2zM673.5 392.4h2.2v2.2h-2.2zM696.1 392.4h2.2v2.2h-2.2zM702.4 391.5h2.2v2.2h-2.2zM697.9 398.8h2.2v2.2h-2.2zM704.2 397.9h2.2v2.2h-2.2zM700.2 405.6h2.2v2.2h-2.2zM498.7 350h2.2v2.2h-2.2zM509.5 354.9h2.2v2.2h-2.2zM490.8 367.2h2.2v2.2h-2.2zM508.6 368.1h2.2v2.2h-2.2zM523.6 363.9h2.2v2.2h-2.2zM533.9 358.5h2.2v2.2h-2.2zM533.9 369.9h2.2v2.2h-2.2zM545.7 365.9h2.2v2.2h-2.2zM551.6 350h2.2v2.2h-2.2zM556.7 356h2.2v2.2h-2.2zM561.5 350.9h2.2v2.2h-2.2zM569.7 348.2h2.2v2.2h-2.2zM564.6 369h2.2v2.2h-2.2zM573.8 367.2h2.2v2.2h-2.2zM587.7 352.7h2.2v2.2h-2.2zM587.7 359.9h2.2v2.2h-2.2zM585.4 373.1h2.2v2.2h-2.2zM591.7 373.1h2.2v2.2h-2.2zM609.9 351.8h2.2v2.2h-2.2zM609.9 359h2.2v2.2h-2.2zM622.9 365h2.2v2.2h-2.2zM607.9 374.9h2.2v2.2h-2.2zM471.6 376.2h2.2v2.2h-2.2zM486.6 381.1h2.2v2.2h-2.2zM491.5 386.1h2.2v2.2h-2.2zM497.4 387.9h2.2v2.2h-2.2zM509.5 383.1h2.2v2.2h-2.2zM535.7 384h2.2v2.2h-2.2zM552.5 387h2.2v2.2h-2.2zM559.7 391h2.2v2.2h-2.2zM567.9 387h2.2v2.2h-2.2zM586.8 384.3h2.2v2.2h-2.2zM608.5 384h2.2v2.2h-2.2zM625.6 383.1h2.2v2.2h-2.2zM496.9 393.9h2.2v2.2h-2.2zM479.4 399.7h2.2v2.2h-2.2zM496.5 399.7h2.2v2.2h-2.2zM491.5 403.3h2.2v2.2h-2.2zM543.5 399.7h2.2v2.2h-2.2zM552.5 397.9h2.2v2.2h-2.2zM546.6 403.3h2.2v2.2h-2.2zM586.8 397.9h2.2v2.2h-2.2zM592.8 397.9h2.2v2.2h-2.2zM608.5 398.4h2.2v2.2h-2.2zM570.2 404.5h2.2v2.2h-2.2zM480.7 412.4h2.2v2.2h-2.2zM513.7 409.7h2.2v2.2h-2.2zM504.7 413.7h2.2v2.2h-2.2zM558.5 412.4h2.2v2.2h-2.2zM570.2 411.5h2.2v2.2h-2.2zM586.5 409.7h2.2v2.2h-2.2zM502 420.6h2.2v2.2h-2.2zM558.5 418.4h2.2v2.2h-2.2zM563.7 417.5h2.2v2.2h-2.2zM568.8 416.6h2.2v2.2h-2.2zM479.4 425.6h2.2v2.2h-2.2zM532.7 424.7h2.2v2.2h-2.2zM570.2 424.7h2.2v2.2h-2.2zM608.5 424.7h2.2v2.2h-2.2zM586.5 428.7h2.2v2.2h-2.2zM470.9 432.7h2.2v2.2h-2.2zM522.7 434.6h2.2v2.2h-2.2zM570.2 431h2.2v2.2h-2.2zM608.5 433.6h2.2v2.2h-2.2zM484.4 437.7h2.2v2.2h-2.2zM533.6 440.1h2.2v2.2h-2.2zM513.7 441.9h2.2v2.2h-2.2zM570.2 435.9h2.2v2.2h-2.2zM586.5 436.8h2.2v2.2h-2.2zM570.2 441.9h2.2v2.2h-2.2zM545.7 447.6h2.2v2.2h-2.2zM557.6 451.8h2.2v2.2h-2.2zM565.5 451.8h2.2v2.2h-2.2zM613.5 447.6h2.2v2.2h-2.2zM606.3 450.9h2.2v2.2h-2.2zM608.5 455.8h2.2v2.2h-2.2zM483.9 454.9h2.2v2.2h-2.2zM489.7 454.9h2.2v2.2h-2.2zM575.6 458.8h2.2v2.2h-2.2zM548.5 460.6h2.2v2.2h-2.2zM553.8 459.7h2.2v2.2h-2.2zM559.7 461.7h2.2v2.2h-2.2zM503.8 461.7h2.2v2.2h-2.2zM510.6 461.7h2.2v2.2h-2.2zM518.6 461.7h2.2v2.2h-2.2zM530.5 461.7h2.2v2.2h-2.2zM485.7 463.9h2.2v2.2h-2.2zM623.8 463.9h2.2v2.2h-2.2zM516.8 467.9h2.2v2.2h-2.2zM524.5 467.9h2.2v2.2h-2.2zM530.5 467.9h2.2v2.2h-2.2zM548.5 467h2.2v2.2h-2.2zM481.7 469.9h2.2v2.2h-2.2zM535.7 469.9h2.2v2.2h-2.2zM556.7 469.9h2.2v2.2h-2.2zM494.4 476h2.2v2.2h-2.2zM510.6 478.3h2.2v2.2h-2.2zM623.8 477.8h2.2v2.2h-2.2zM496.5 482h2.2v2.2h-2.2zM516.8 487h2.2v2.2h-2.2zM523.6 485.9h2.2v2.2h-2.2zM529.6 487h2.2v2.2h-2.2zM623.8 492.8h2.2v2.2h-2.2zM492.6 496.9h2.2v2.2h-2.2zM528.5 499.6h2.2v2.2h-2.2zM537.5 503.6h2.2v2.2h-2.2zM591.7 500.9h2.2v2.2h-2.2zM613.5 501.8h2.2v2.2h-2.2zM597.7 508.7h2.2v2.2h-2.2zM498.7 509.9h2.2v2.2h-2.2zM543.5 513.9h2.2v2.2h-2.2zM570.6 515h2.2v2.2h-2.2zM578.7 517.2h2.2v2.2h-2.2zM599.5 517.2h2.2v2.2h-2.2zM578.7 523.1h2.2v2.2h-2.2zM543.5 524.9h2.2v2.2h-2.2zM591.7 526.2h2.2v2.2h-2.2zM600.4 528.9h2.2v2.2h-2.2zM608.5 527.1h2.2v2.2h-2.2zM622.6 528.9h2.2v2.2h-2.2zM492.6 529.8h2.2v2.2h-2.2zM543.5 532.1h2.2v2.2h-2.2zM495.6 536.1h2.2v2.2h-2.2zM524.5 537h2.2v2.2h-2.2zM533.6 537h2.2v2.2h-2.2zM529.6 542.8h2.2v2.2h-2.2zM562.4 546.1h2.2v2.2h-2.2zM547.6 548.8h2.2v2.2h-2.2zM487.5 551.1h2.2v2.2h-2.2zM526.7 556h2.2v2.2h-2.2zM608.5 407.6h2.2v2.2h-2.2zM681.6 410.6h2.2v2.2h-2.2zM699.7 405.8h2.2v2.2h-2.2zM702.4 530.7h2.2v2.2h-2.2zM702.4 539.7h2.2v2.2h-2.2zM700.2 547h2.2v2.2h-2.2zM698.8 552.4h2.2v2.2h-2.2zM487.5 551.1h2.2v2.2h-2.2zM526.7 556.7h2.2v2.2h-2.2zM518.6 567h2.2v2.2h-2.2zM489.7 573.8h2.2v2.2h-2.2zM524.5 576.9h2.2v2.2h-2.2zM589.5 576.9h2.2v2.2h-2.2zM625.6 580h2.2v2.2h-2.2zM605.8 586.8h2.2v2.2h-2.2zM526.7 589h2.2v2.2h-2.2zM588.6 590.8h2.2v2.2h-2.2zM524.5 594.9h2.2v2.2h-2.2zM565.7 596.2h2.2v2.2h-2.2zM555.6 597.6h2.2v2.2h-2.2zM587.7 598.6h2.2v2.2h-2.2zM544.8 600h2.2v2.2h-2.2zM522.7 601.3h2.2v2.2h-2.2zM561.5 603.6h2.2v2.2h-2.2zM570.6 603.6h2.2v2.2h-2.2zM586.8 603.6h2.2v2.2h-2.2zM482.6 606.1h2.2v2.2h-2.2zM539.5 606.1h2.2v2.2h-2.2zM576.5 606.1h2.2v2.2h-2.2zM460.4 665h2.2v2.2h-2.2zM473.6 673.8h2.2v2.2h-2.2zM453.6 683.1h2.2v2.2h-2.2zM698.8 552.5h2.2v2.2h-2.2zM704.2 555.8h2.2v2.2h-2.2zM690.6 568.4h2.2v2.2h-2.2zM702.4 576h2.2v2.2h-2.2zM700.6 581.9h2.2v2.2h-2.2zM681.6 586.8h2.2v2.2h-2.2zM697.9 586.8h2.2v2.2h-2.2zM694.3 592.8h2.2v2.2h-2.2zM701.5 596.2h2.2v2.2h-2.2zM688.8 601.3h2.2v2.2h-2.2zM671.7 602.2h2.2v2.2h-2.2zM691.5 606.1h2.2v2.2h-2.2zM684.3 607h2.2v2.2h-2.2zM696.1 608.8h2.2v2.2h-2.2zM687.9 611.7h2.2v2.2h-2.2zM660.5 613h2.2v2.2h-2.2zM677.5 613.9h2.2v2.2h-2.2zM683.4 615.7h2.2v2.2h-2.2zM675.3 619.9h2.2v2.2h-2.2zM670.8 622.9h2.2v2.2h-2.2zM669 628.3h2.2v2.2h-2.2zM662.7 632h2.2v2.2h-2.2zM667.2 636.1h2.2v2.2h-2.2zM666.3 643.7h2.2v2.2h-2.2zM642.8 652.2h2.2v2.2h-2.2zM622.6 654h2.2v2.2h-2.2zM637.4 656h2.2v2.2h-2.2zM624.7 659.6h2.2v2.2h-2.2zM633.8 659.6h2.2v2.2h-2.2zM620.2 663h2.2v2.2h-2.2zM629.3 665h2.2v2.2h-2.2zM638.3 663.9h2.2v2.2h-2.2zM613.5 668.1h2.2v2.2h-2.2zM624.7 668.1h2.2v2.2h-2.2zM633.8 669h2.2v2.2h-2.2zM642.8 669h2.2v2.2h-2.2zM628.4 673.8h2.2v2.2h-2.2zM637.4 673.8h2.2v2.2h-2.2zM606.3 676.7h2.2v2.2h-2.2zM632.9 678h2.2v2.2h-2.2zM600.9 681.1h2.2v2.2h-2.2zM591.7 685.2h2.2v2.2h-2.2zM547.6 562.4h2.2v2.2h-2.2zM547.6 568.4h2.2v2.2h-2.2zM547.6 574.7h2.2v2.2h-2.2zM547.6 581h2.2v2.2h-2.2zM547.6 587.2h2.2v2.2h-2.2zM553.8 562.4h2.2v2.2h-2.2zM553.8 568.4h2.2v2.2h-2.2zM553.8 574.7h2.2v2.2h-2.2zM553.8 581h2.2v2.2h-2.2zM553.8 587.2h2.2v2.2h-2.2zM559.7 562.4h2.2v2.2h-2.2zM559.7 568.4h2.2v2.2h-2.2zM559.7 574.7h2.2v2.2h-2.2zM559.7 581h2.2v2.2h-2.2zM559.7 587.2h2.2v2.2h-2.2zM565.7 562.4h2.2v2.2h-2.2zM565.7 568.4h2.2v2.2h-2.2zM565.7 574.7h2.2v2.2h-2.2zM565.7 581h2.2v2.2h-2.2zM565.7 587.2h2.2v2.2h-2.2z" fill="#e8242a"/>
<path d="M441.7 709.9h3.2v4h-3.2zM449.6 710.4h3.2v4h-3.2zM440.9 727.1h3.2v4h-3.2zM448.4 727.4h3.2v4h-3.2zM704.7 643.9h3.2v4h-3.2zM340.1 241.7h3.2v4h-3.2zM347.2 236.8h3.2v4h-3.2zM356.4 251h3.2v4h-3.2zM349.7 255.5h3.2v4h-3.2zM383.5 332.5h4v4.4h-4zM376 337.8h4v4.4h-4zM368 342.5h4v4.4h-4zM533.4 209.7h3.2v4h-3.2zM541.4 210.8h3.2v4h-3.2zM532.2 227.2h3.2v4h-3.2zM540.4 228h3.2v4h-3.2zM352.6 419.2h3.2v4h-3.2zM357.6 425.8h3.2v4h-3.2zM338.9 429.3h3.2v4h-3.2zM343.9 435.5h3.2v4h-3.2zM376 338.6h4v4.4h-4zM368 342.8h4v4.4h-4zM360 347.8h4v4.4h-4zM351.8 353.3h4v4.4h-4zM343.8 358.3h4v4.4h-4zM336 363.6h4v4.4h-4zM328 368.6h4v4.4h-4zM265.6 588.8h3.2v4h-3.2zM269.6 596h3.2v4h-3.2zM250.6 596.7h3.2v4h-3.2zM254.2 603.8h3.2v4h-3.2zM390.6 503h3.2v4h-3.2zM407.2 503h3.2v4h-3.2zM390.6 511h3.2v4h-3.2zM407.2 511h3.2v4h-3.2zM502 256.1h3.2v4h-3.2zM510.5 256.1h3.2v4h-3.2zM501.5 272.4h3.2v4h-3.2zM509.6 272.9h3.2v4h-3.2zM561.4 322.4h3.2v4h-3.2zM561.4 330.7h3.2v4h-3.2zM646.4 338.3h3.2v4h-3.2zM638.7 341.9h3.2v4h-3.2zM642.8 475.3h3.2v4h-3.2zM650.8 475.3h3.2v4h-3.2zM692.9 421.5h3.2v4h-3.2zM701 422h3.2v4h-3.2zM691.9 438.1h3.2v4h-3.2zM700.1 439.2h3.2v4h-3.2zM567.5 470.2h3v5.2h-3zM579.6 470.2h3v5.2h-3zM591.5 470.2h3v5.2h-3zM603.6 470.2h3v5.2h-3zM567.5 481h3v5.2h-3zM579.6 481h3v5.2h-3zM591.5 481h3v5.2h-3zM603.6 481h3v5.2h-3zM632.7 617.5h3.2v4h-3.2zM638.1 623.8h3.2v4h-3.2zM549.9 622.4h3.2v4h-3.2zM549.9 630.7h3.2v4h-3.2zM457.8 617.9h3.2v4h-3.2zM527.1 665.9h3.2v4h-3.2zM535.2 665.9h3.2v4h-3.2zM526.7 682.5h3.2v4h-3.2zM534.5 682.5h3.2v4h-3.2zM691.9 632.9h3.2v4h-3.2zM687.1 639.2h3.2v4h-3.2zM699.2 650.6h3.2v4h-3.2zM478.9 585.7h4v4.4h-4zM490.8 585.7h4v4.4h-4zM502.5 585.7h4v4.4h-4zM514.6 585.7h4v4.4h-4z" fill="#fe0404"/>
<g fill="#fe0404"><circle cx="438.3" cy="720.2" r="4.3"/><circle cx="455" cy="721.1" r="4.3"/><circle cx="343" cy="253" r="4.3"/><circle cx="357" cy="243.7" r="4.3"/><circle cx="530" cy="220" r="4.3"/><circle cx="546.7" cy="221.3" r="4.3"/><circle cx="345" cy="422.5" r="4.3"/><circle cx="354.7" cy="436.2" r="4.3"/><circle cx="257.5" cy="591.3" r="4.3"/><circle cx="265.8" cy="605.8" r="4.3"/><circle cx="400.3" cy="500.3" r="4.3"/><circle cx="400.8" cy="517" r="4.3"/><circle cx="499.1" cy="265.9" r="4.3"/><circle cx="515.7" cy="266.6" r="4.3"/><circle cx="553.3" cy="328.5" r="4.3"/><circle cx="572.6" cy="328.5" r="4.3"/><circle cx="640.8" cy="333.4" r="4.3"/><circle cx="647.5" cy="351.5" r="4.3"/><circle cx="648.4" cy="467.7" r="4.3"/><circle cx="648.8" cy="487.6" r="4.3"/><circle cx="690.5" cy="431.6" r="4.3"/><circle cx="705.3" cy="432.5" r="4.3"/><circle cx="644.4" cy="616.4" r="4.3"/><circle cx="629.5" cy="628.5" r="4.3"/><circle cx="541.5" cy="628.5" r="4.3"/><circle cx="561.2" cy="628.5" r="4.3"/><circle cx="524.4" cy="675.8" r="4.3"/><circle cx="540.4" cy="676.8" r="4.3"/><circle cx="702.6" cy="637.2" r="4.3"/><circle cx="691.7" cy="649.8" r="4.3"/><circle cx="463.3" cy="629.4" r="4.3"/></g>
<path d="M438.5 715.9A4.3 4.3 0 0 1 438.1 724.5 M454.8 725.4A4.3 4.3 0 0 1 455.2 716.8 M340.6 249.4A4.3 4.3 0 0 1 345.4 256.6 M359.4 247.2A4.3 4.3 0 0 1 354.6 240.1 M530.3 215.7A4.3 4.3 0 0 1 529.7 224.3 M546.3 225.6A4.3 4.3 0 0 1 547 217 M348.5 420A4.3 4.3 0 0 1 341.5 425 M351.2 438.6A4.3 4.3 0 0 1 358.2 433.7 M261.2 589.2A4.3 4.3 0 0 1 253.8 593.5 M262.1 608A4.3 4.3 0 0 1 269.6 603.7 M404.6 500.2A4.3 4.3 0 0 1 396 500.5 M396.5 517.1A4.3 4.3 0 0 1 405.1 516.9 M499.3 261.6A4.3 4.3 0 0 1 498.9 270.2 M515.5 270.9A4.3 4.3 0 0 1 515.9 262.3 M553.3 324.2A4.3 4.3 0 0 1 553.3 332.8 M572.6 332.8A4.3 4.3 0 0 1 572.6 324.2 M644.9 331.9A4.3 4.3 0 0 1 636.8 334.9 M643.5 353A4.3 4.3 0 0 1 651.5 350 M652.7 467.6A4.3 4.3 0 0 1 644.1 467.8 M644.5 487.6A4.3 4.3 0 0 1 653.1 487.5 M690.7 427.3A4.3 4.3 0 0 1 690.2 435.9 M705 436.8A4.3 4.3 0 0 1 705.5 428.2 M647.1 619.8A4.3 4.3 0 0 1 641.7 613.1 M626.7 625.2A4.3 4.3 0 0 1 632.2 631.9 M541.5 624.2A4.3 4.3 0 0 1 541.5 632.8 M561.2 632.8A4.3 4.3 0 0 1 561.2 624.2 M524.6 671.6A4.3 4.3 0 0 1 524.1 680.1 M540.2 681A4.3 4.3 0 0 1 540.7 672.5 M705.8 640A4.3 4.3 0 0 1 699.3 634.4 M688.5 647A4.3 4.3 0 0 1 695 652.6 M459 629.4A4.3 4.3 0 0 1 467.6 629.4" fill="none" stroke="#f0a028" stroke-width="1.2"/>
<circle cx="475.1" cy="353.3" r="8.2" fill="#fe0404"/>
<circle cx="623.1" cy="603.3" r="8.2" fill="#fe0404"/></g></defs>
<rect x="155" y="74" width="1121" height="732" fill="#000"/>
<use href="#brd" x="0" y="0"/>
<use href="#brd" x="569.3" y="0"/>
<use href="#brd" x="0" y="-564.4"/>
<use href="#brd" x="569.3" y="-564.4"/>
<rect x="169" y="74" width="1" height="695" fill="#4c7c3a"/><rect x="170" y="74" width="1.100" height="695" fill="#a090ba"/>
<path d="M170 769.3H477.3V755.5Q477.3 750.3 482.5 750.3H510Q515.2 750.3 515.2 755.5V769.3H1276" stroke="#b4b4b4" stroke-width="1.5" fill="none"/>
<path d="M477.3 768V755.5Q477.3 750.3 482.5 750.3H510Q515.2 750.3 515.2 755.5V768" stroke="#e8f0d0" stroke-width="1.2" fill="none"/>
<g stroke="#fff" stroke-width="1" fill="none"><circle cx="170.5" cy="769.5" r="6.5"/><path d="M161 769.5h19M170.5 760v19M163 762l15 15M178 762l-15 15"/></g>
<polygon points="190.6,737.8 197.2,737.8 201.9,742.5 201.9,749.1 197.2,753.8 190.6,753.8 185.9,749.1 185.9,742.5" fill="#fe0404"/>
<text x="327.6" y="768.6" font-family="Liberation Sans, sans-serif" font-size="9.5" font-style="italic" fill="#fff">0</text>
<rect x="330" y="768.6" width="2.4" height="1.6" fill="#a070e0"/>
</svg>
<div class="a" id="left">
<div class="a" style="left:0;top:0;width:155px;height:2px;background:#2f6e62"></div>
<div class="a" style="left:153px;top:2px;width:2px;height:731px;background:#c4fbee"></div>
<div class="a" style="left:0;top:2px;width:2px;height:731px;background:#3f9c86"></div>
<div class="lbox mono" style="top:4px;height:19px;font-size:15.1px;line-height:18.5px;padding-left:2px"><span class="sy">Job : 4a49003sa0</span></div>
<div class="lbox mono" style="top:23px;height:19px;font-size:15.1px;line-height:18.5px;padding-left:2px"><span class="sy">Step: set+1</span></div>
<div class="lbox" style="top:44px;height:27px;background:#55cbb0"><div class="a mono" style="left:2px;top:2px;width:144px;height:21px;background:#9ddcdc;border:2px solid;border-color:#d6f6f6 #4f9494 #4f9494 #d6f6f6;font-size:15.1px;line-height:18px;padding-left:2px"><span class="sy">Job Matrix ...</span></div></div>
<div class="a" style="left:0;top:71px;width:155px;height:4px;background:#3a8a78"></div>
<div class="a" style="left:5px;top:75px;width:123px;height:435px;border:1px solid;border-color:#1c5a4c #c4fbee #c4fbee #1c5a4c;box-shadow:inset 1px 1px 0 #3f9c86, inset -1px -1px 0 #0a2a22"></div>
<div class="row" style="top:79px;height:17.5px"></div>
<div class="row" style="top:100px;height:17.5px"></div>
<div class="row" style="top:121px;height:17.5px"></div>
<div class="row" style="top:142px;height:17.5px"></div>
<div class="row" style="top:163px;height:17.5px"></div>
<div class="row" style="top:184px;height:17.5px"></div>
<div class="row" style="top:205px;height:17.5px"></div>
<div class="row" style="top:226px;height:17.5px"></div>
<div class="row" style="top:247.5px;height:33px"></div>
<div class="row" style="top:284.5px;height:49px"></div>
<div class="row" style="top:337.5px;height:161px"></div>
<div class="row" style="top:79px;height:17.5px;background:transparent"><div class="cb"><i></i></div><div class="lab" style="background:#0a9f7e;line-height:16.0px">ts</div></div>
<div class="row" style="top:100px;height:17.5px;background:transparent"><div class="cb"><i></i></div><div class="lab" style="background:#9ddcdc;line-height:16.0px">plncs</div></div>
<div class="row" style="top:121px;height:17.5px;background:transparent"><div class="cb"><i></i></div><div class="lab" style="background:#ffc54f;line-height:16.0px">cs</div></div>
<div class="row" style="top:142px;height:17.5px;background:transparent"><div class="cb"><i></i></div><div class="lab" style="background:#9ddcdc;line-height:16.0px">pln2t</div></div>
<div class="row" style="top:163px;height:17.5px;background:transparent"><div class="cb"><i></i></div><div class="lab" style="background:#ffc54f;line-height:16.0px">sig2t</div></div>
<div class="row" style="top:184px;height:17.5px;background:transparent"><div class="cb"><i></i></div><div class="lab" style="background:#9ddcdc;line-height:16.0px">pln3b</div></div>
<div class="row" style="top:205px;height:17.5px;background:transparent"><div class="cb"><i></i></div><div class="lab" style="background:#ffc54f;line-height:16.0px">sig3b</div></div>
<div class="row" style="top:226px;height:17.5px;background:transparent"><div class="cb"><i></i></div><div class="lab" style="background:#9ddcdc;line-height:16.0px">plnss</div></div>
<div class="row" style="top:247.5px;height:17px;background:transparent"><div class="cb"><i></i></div><div class="lab" style="background:#ffc54f;line-height:15.5px">ss</div></div>
<div class="row" style="top:263.5px;height:17px;background:transparent"><div class="cb"><i></i></div><div class="lab" style="background:#0a9f7e;line-height:15.5px">bs</div></div>
<div class="row" style="top:284.5px;height:17px;background:transparent"><div class="cb" style="border-color:#0c0ca0;background:#0c0ca0"><i></i></div><div class="sw" style="background:#fe0404"></div><div class="lab" style="background:#9bb6bf;line-height:15.5px">drl</div><svg class="a" style="left:109px;top:6px" width="6" height="6" viewBox="0 0 6 6"><path d="M.5 .5h5v5h-5zM3 0v6M0 3h6" fill="none" stroke="#000" stroke-width="1"/></svg></div>
<div class="row" style="top:300.5px;height:17px;background:transparent"><div class="cb"><i></i></div><div class="lab" style="background:#9bb6bf;line-height:15.5px">ldi</div></div>
<div class="row" style="top:316.5px;height:17px;background:transparent"><div class="cb"><i></i></div><div class="sw" style="background:#479a08"></div><div class="lab" style="background:#dcdcdc;line-height:15.5px">rout</div></div>
<div class="row" style="top:337.5px;height:17px;background:transparent"><div class="cb"><i></i></div><div class="lab" style="background:#9ddcdc;line-height:15.5px">tp</div></div>
<div class="row" style="top:353.5px;height:17px;background:transparent"><div class="cb"><i></i></div><div class="lab" style="background:#9ddcdc;line-height:15.5px">bp</div></div>
<div class="row" style="top:369.5px;height:17px;background:transparent"><div class="cb"><i></i></div><div class="lab" style="background:#9ddcdc;line-height:15.5px">npth</div></div>
<div class="row" style="top:385.5px;height:17px;background:transparent"><div class="cb"><i></i></div><div class="lab" style="background:#9ddcdc;line-height:15.5px">mill</div></div>
<div class="row" style="top:401.5px;height:17px;background:transparent"><div class="cb"><i></i></div><div class="lab" style="background:#9ddcdc;line-height:15.5px">1drlnpth</div></div>
<div class="row" style="top:417.5px;height:17px;background:transparent"><div class="cb"><i></i></div><div class="lab" style="background:#9ddcdc;line-height:15.5px">biaozhu</div></div>
<div class="row" style="top:433.5px;height:17px;background:transparent"><div class="cb"><i></i></div><div class="lab" style="background:#9ddcdc;line-height:15.5px">d</div></div>
<div class="row" style="top:449.5px;height:17px;background:transparent"><div class="cb"><i></i></div><div class="lab" style="background:#9ddcdc;line-height:15.5px">121</div></div>
<div class="row" style="top:465.5px;height:17px;background:transparent"><div class="cb"><i></i></div><div class="lab" style="background:#9ddcdc;line-height:15.5px">a</div></div>
<div class="row" style="top:481.5px;height:17px;background:transparent"><div class="cb"><i></i></div><div class="lab" style="background:#9ddcdc;line-height:15.5px">a1</div></div>
<div class="a" style="left:2px;top:706px;width:151px;height:3.5px;background:#92efdc"></div>
<div class="a mono" style="left:3px;top:710px;width:150px;height:19px;border:1px solid #000;background:#ffc54f;font-size:11.7px;line-height:19px;padding-left:3px"><span class="sy">Selected : 0</span></div>
</div>
<div class="a" id="rpanel">
<div class="a" style="left:0;top:0;width:164px;height:2px;background:#2f6e62"></div>
<div class="a" style="left:0;top:2px;width:2px;height:162px;background:#3a8a78"></div>
<div class="a" style="left:2px;top:2px;width:162px;height:162px;background:#0c2a26"></div>
<div class="a" style="left:0;top:163px;width:164px;height:3px;background:#aeeee0"></div>
<div class="a" style="left:0;top:166px;width:164px;height:244px;background:#101010;border-left:2px solid #808080"></div>
<div class="tb t1" style="left:3px;top:4px"><div class="f"></div><svg viewBox="0 0 30 30"><rect x="8" y="9" width="15.5" height="14" stroke="#000" fill="none" stroke-width="2"/><path d="M15.5 1.5l5 4.5h-2.4v6.5h-5.2v-6.5h-2.4z" fill="#000"/></svg></div>
<div class="tb t1" style="left:43px;top:4px"><div class="f"></div><svg viewBox="0 0 30 30"><rect x="8" y="7" width="15.5" height="14" stroke="#000" fill="none" stroke-width="2"/><path d="M15.5 28l5.5-5h-2.9v-7h-5.2v7h-2.9z" fill="#000"/></svg></div>
<div class="tb t1" style="left:83px;top:4px"><div class="f"></div><svg viewBox="0 0 30 30"><path d="M5 14.5L14.5 5l9.5 9.5M8 14v12h13.5v-12M13.5 26v-8.5h4.5v8.5M19 9.5v-5h1.8v7" stroke="#000" fill="none" stroke-width="1.6"/><rect x="9.8" y="17" width="2.4" height="2.4" stroke="#000" fill="none" stroke-width="1"/><path d="M20.5 3l1.5-1.5" stroke="#000" fill="none" stroke-width="1"/></svg></div>
<div class="tb t1" style="left:123px;top:4px"><div class="f"></div><svg viewBox="0 0 30 30"><rect x="4" y="4.500" width="22" height="21.5" stroke="#000" fill="none" stroke-width="2"/><path d="M15.500 5v21M4 20h22" stroke="#000" fill="none" stroke-width="1.4"/><text x="16.500" y="18.500" font-family="Liberation Sans, sans-serif" font-size="6" font-weight="bold" fill="#000">xy</text></svg></div>
<div class="tb t1" style="left:3px;top:44px"><div class="f"></div><svg viewBox="0 0 30 30"><rect x="9" y="7" width="15" height="15" stroke="#000" fill="none" stroke-width="2"/><path d="M2 14.5l5-5v2.700h6v4.600h-6v2.700z" fill="#000"/></svg></div>
<div class="tb t1" style="left:43px;top:44px"><div class="f"></div><svg viewBox="0 0 30 30"><rect x="6" y="7" width="15" height="15" stroke="#000" fill="none" stroke-width="2"/><path d="M28 14.5l-5-5v2.700h-6v4.600h6v2.700z" fill="#000"/></svg></div>
<div class="tb t1" style="left:83px;top:44px"><div class="f"></div><svg viewBox="0 0 30 30"><rect x="14.5" y="8.500" width="12" height="13.5" stroke="#000" fill="none" stroke-width="2"/><path d="M6 12.500h2.500a3.200 4.200 0 0 1 0 8.500h-3" stroke="#000" fill="none" stroke-width="2.200"/><path d="M2.500 12.500l4.500-4v8z" fill="#000"/></svg></div>
<div class="tb t1" style="left:123px;top:44px"><div class="f"></div><svg viewBox="0 0 30 30"><path d="M25 8H6.500v6.500H24v6.500H5" stroke="#000" fill="none" stroke-width="2"/><path d="M27.500 5l-3 3l3 3M2.500 18l3 3l-3 3" stroke="#000" fill="none" stroke-width="1.100"/></svg></div>
<div class="tb t1" style="left:3px;top:84px"><div class="f"></div><svg viewBox="0 0 30 30"><rect x="8.500" y="8" width="13.5" height="14" stroke="#000" fill="none" stroke-width="2"/><path d="M10 0.300h10v1h-2l-3 3.200l-3-3.200h-2zM10 29.700h10v-1h-2l-3-3.200l-3 3.200h-2zM0.300 10.500l5.700 4.200l-5.700 4.200zM29.700 10.500l-5.700 4.200l5.700 4.200z" fill="#000"/></svg></div>
<div class="tb t1" style="left:43px;top:84px"><div class="f"></div><svg viewBox="0 0 30 30"><rect x="11.500" y="11.500" width="7" height="7" stroke="#000" fill="none" stroke-width="1.800"/><path d="M15 4l4 3.500h-8zM15 26.500l4-3.500h-8zM3.500 15l4-4.500v9zM26.500 15l-4-4.500v9z" fill="#000"/><path d="M10 9h10M10 21.500h10" stroke="#000" stroke-width="1.200"/></svg></div>
<div class="tb t1" style="left:83px;top:84px"><div class="f"></div><svg viewBox="0 0 30 30"><text x="4" y="20.500" font-family="Liberation Sans, sans-serif" font-size="15.5" font-weight="bold" fill="#000" textLength="21" lengthAdjust="spacingAndGlyphs">1:2</text></svg></div>
<div class="tb t1" style="left:123px;top:84px"><div class="f"></div><svg viewBox="0 0 30 30"><rect x="4" y="4" width="22" height="22" stroke="#000" fill="none" stroke-width="2"/><text x="10.500" y="21.500" font-family="Liberation Sans, sans-serif" font-size="16" font-weight="bold" fill="#000">?</text></svg></div>
<div class="tb t1" style="left:3px;top:124px"><div class="f"></div><svg viewBox="0 0 30 30"><path d="M3 5.500h17" stroke="#000" stroke-width="2.400"/><path d="M21 2.500a3.500 3.500 0 1 0 0 6" stroke="#000" fill="none" stroke-width="1.800"/><path d="M3 13l3.500-2h19v4h-19z" stroke="#000" fill="none" stroke-width="1.100"/><path d="M13 20c4-3 8-3 10-1s0 6-3 8s-8 2-10-1s0-4 3-6z" stroke="#000" fill="none" stroke-width="1.100"/><circle cx="14" cy="24" r="1" stroke="#000" fill="none"/><circle cx="17" cy="21" r="1" stroke="#000" fill="none"/><circle cx="20.500" cy="20.500" r="1" stroke="#000" fill="none"/></svg></div>
<div class="tb t1" style="left:43px;top:124px"><div class="f"></div><svg viewBox="0 0 30 30"><path d="M10 0v30M20 0v30M0 10h30M0 20h30" stroke="#d8a0a4" stroke-width=".7" fill="none"/></svg></div>
<div class="tb t1r" style="left:83px;top:124px"><div class="f"></div><svg viewBox="0 0 30 30"><path d="M4.500 1v11.500h10.500v14.500M12 5v19h-6" stroke="#0a0af0" stroke-width="1.200" fill="none"/><path d="M4.500 1v11.500M4.500 12.500h10v14" stroke="#fe0404" stroke-width="1.200" fill="none"/><circle cx="12" cy="4.500" r="2.600" fill="#0a0af0"/><circle cx="6" cy="23.500" r="2.600" fill="#0a0af0"/><circle cx="4.500" cy="13" r="2.600" fill="#fe0404"/><rect x="16.500" y="2.500" width="11" height="25" stroke="#000" fill="none" stroke-width="1.300"/><circle cx="22" cy="8" r="3.600" fill="#fe0404"/><circle cx="22" cy="16" r="2.400" fill="#fff" stroke="#000"/><circle cx="22" cy="23" r="2.400" fill="#fff" stroke="#000"/></svg></div>
<div class="tb t1r" style="left:123px;top:124px"><div class="f"></div><svg viewBox="0 0 30 30"><path d="M4.500 1v12M12 5v19h-6" stroke="#000" stroke-width="1.300" fill="none"/><path d="M7 11.500h5M8 11.500v-3M10 11.500v-3M12 11.500v-3" stroke="#fe0404" stroke-width="1" fill="none"/><circle cx="12" cy="4.500" r="2.600" fill="#000"/><circle cx="6" cy="23.500" r="2.600" fill="#000"/><circle cx="4.500" cy="13.500" r="2.600" fill="#000"/><rect x="16.500" y="2.500" width="11" height="25" stroke="#000" fill="none" stroke-width="1.300"/><circle cx="22" cy="8" r="3.600" fill="#fe0404"/><circle cx="22" cy="16" r="2.400" fill="#fff" stroke="#000"/><circle cx="22" cy="23" r="2.400" fill="#fff" stroke="#000"/></svg></div>
<div class="tb t2" style="left:3px;top:168px"><div class="f"></div><svg viewBox="0 0 30 30"><rect x="7.500" y="8.500" width="14.500" height="14.500" stroke="#000" fill="none" stroke-width="1.200"/><circle cx="14.500" cy="16" r="5.800" fill="#000"/><path d="M19 9l7-6.500" stroke="#000" stroke-width="2"/><path d="M27.500 1l-6.500 1.200l5.300 5.300z" fill="#000"/></svg></div>
<div class="tb t2" style="left:43px;top:168px"><div class="f"></div><svg viewBox="0 0 30 30"><rect x="0" y="0" width="30" height="30" fill="#000"/><rect x="13" y="3.500" width="12.500" height="12" fill="none" stroke="#fe0404" stroke-width="2"/><rect x="3" y="19" width="6.500" height="6.500" fill="none" stroke="#0a0af0" stroke-width="2"/><path d="M3.500 18l9.500-14.500M10.500 25l15-9" stroke="#fff" stroke-width="1"/></svg></div>
<div class="tb t2" style="left:83px;top:168px"><div class="f"></div><svg viewBox="0 0 30 30"><rect x="3" y="12" width="25" height="7" fill="#000"/><path d="M5.500 11.500v4M8 11.500v2.500M10.500 11.500v4M13 11.500v2.500M15.500 11.500v4M18 11.500v2.500M20.500 11.500v4M23 11.500v2.500M25.500 11.500v4" stroke="#fff" stroke-width="1"/></svg></div>
<div class="tb t2" style="left:123px;top:168px"><div class="f"></div><svg viewBox="0 0 30 30"><rect x="4" y="4.500" width="22" height="21.500" stroke="#000" fill="none" stroke-width="1.200" stroke-dasharray="2 1.500"/><path d="M11 8h8l4.500 4.500v6.500l-4.500 4.500h-8l-4-4.500v-6.500z" fill="#000"/></svg></div>
<div class="tb t3" style="left:3px;top:208px"><div class="f"></div><svg viewBox="0 0 30 30"><path d="M7.500 7v16h15" stroke="#0a0af0" stroke-width="3.500" fill="none"/><circle cx="7.500" cy="7.500" r="4.500" fill="#0a0af0"/><circle cx="7.500" cy="23" r="4.500" fill="#0a0af0"/><circle cx="22.500" cy="23" r="4.500" fill="#0a0af0"/><circle cx="22.500" cy="7.500" r="4.500" fill="#fe0404"/></svg></div>
<div class="tb t3" style="left:43px;top:208px"><div class="f"></div><svg viewBox="0 0 30 30"><rect x="10.500" y="11.500" width="8" height="8" rx="2" fill="#0a0aa0"/><path d="M7 8l15.500 14.500M22.500 8l-15.500 14.500" stroke="#000" stroke-width="1.600"/></svg></div>
<div class="tb t3" style="left:83px;top:208px"><div class="f"></div><svg viewBox="0 0 30 30"><circle cx="22.500" cy="7.500" r="4.500" fill="#fe0404"/><circle cx="7" cy="22.500" r="3.600" fill="none" stroke="#0a0af0" stroke-width="2"/><path d="M11 18.500l6-6" stroke="#000" stroke-width="1"/><path d="M18 11.500l-3.500 0.800l2.700 2.700z" fill="#000"/></svg></div>
<div class="tb t3" style="left:123px;top:208px"><div class="f"></div><svg viewBox="0 0 30 30"><circle cx="22.500" cy="7.500" r="4.500" fill="#fe0404"/><circle cx="7" cy="22.500" r="4.500" fill="#0a0af0"/><path d="M11 18.500l6-6" stroke="#000" stroke-width="1"/><path d="M18 11.500l-3.500 0.800l2.700 2.700z" fill="#000"/></svg></div>
<div class="tb t3" style="left:3px;top:248px"><div class="f"></div><svg viewBox="0 0 30 30"><path d="M5.500 22l18-17" stroke="#fe0404" stroke-width="2.600" stroke-linecap="round"/><path d="M7 24.500h18" stroke="#0a0af0" stroke-width="2.600" stroke-linecap="round"/><path d="M22 20l-3.500-3.500M18.500 16.500v2.500M18.500 16.500h2.500" stroke="#000" stroke-width="1" fill="none"/></svg></div>
<div class="tb t3" style="left:43px;top:248px"><div class="f"></div><svg viewBox="0 0 30 30"><path d="M15 14l9-9" stroke="#fe0404" stroke-width="2.800" stroke-linecap="round"/><path d="M5.500 22.500l9.500-8.500" stroke="#0a0af0" stroke-width="2.800" stroke-linecap="round"/><path d="M17 20.500l3.500-3.500M20.500 17v2.500M20.500 17h-2.500" stroke="#000" stroke-width="1" fill="none"/></svg></div>
<div class="tb t3" style="left:83px;top:248px"><div class="f"></div><svg viewBox="0 0 30 30"><path d="M14 7.500a7.500 7.500 0 0 1 0 15h-2" stroke="#000" fill="none" stroke-width="1.800"/><path d="M9 22.500l4.500-3.500v7z" fill="#000"/></svg></div>
<div class="tb t3" style="left:123px;top:248px"><div class="f"></div><svg viewBox="0 0 30 30"><text transform="translate(13 21.500) scale(-1 1)" font-family="Liberation Sans, sans-serif" font-size="21" font-weight="bold" fill="#0a0af0" textLength="10.500" lengthAdjust="spacingAndGlyphs">F</text><path d="M14.500 3v24" stroke="#000" stroke-width="1.200"/><text x="16.800" y="21.500" font-family="Liberation Sans, sans-serif" font-size="21" font-weight="bold" fill="#fe0404" textLength="10.500" lengthAdjust="spacingAndGlyphs">F</text></svg></div>
<div class="tb t3" style="left:3px;top:288px"><div class="f"></div><svg viewBox="0 0 30 30"><rect x="17" y="2" width="11" height="10.500" fill="#fe0404"/><circle cx="22.500" cy="7.200" r="3" fill="#e4e4e4"/><rect x="2.500" y="17" width="10" height="10" fill="none" stroke="#0a0af0" stroke-width="1.200"/><circle cx="7.500" cy="22" r="3" fill="#0a0af0"/><path d="M13 17l3-3" stroke="#000" stroke-width="1"/><path d="M17 13l-3 0.500l2.500 2.500z" fill="#000"/></svg></div>
<div class="tb t3" style="left:43px;top:288px"><div class="f"></div><svg viewBox="0 0 30 30"><path d="M5 14.500h7.500M17.500 14.500h7.500" stroke="#fe0404" stroke-width="2.600" stroke-linecap="round"/><path d="M12.500 14.500h5" stroke="#0a0af0" stroke-width="2.600"/></svg></div>
<div class="tb t3" style="left:83px;top:288px"><div class="f"></div><svg viewBox="0 0 30 30"><path d="M4.500 4v23M25.500 4v23" stroke="#000" stroke-width="1.200"/><path d="M5.500 15.500h6M18.500 15.500h6M5.500 15.500l2.500-2.200M5.500 15.500l2.500 2.200M24.500 15.500l-2.500-2.200M24.500 15.500l-2.500 2.200" stroke="#0a0af0" stroke-width="1" fill="none"/><rect x="11.500" y="10.500" width="7" height="9.500" fill="none" stroke="#0a0af0" stroke-width="1.200"/><text x="12.800" y="18.500" font-family="Liberation Sans, sans-serif" font-size="8" font-weight="bold" fill="#0a0af0">4</text></svg></div>
<div class="tb t3" style="left:123px;top:288px"><div class="f"></div><svg viewBox="0 0 30 30"><path d="M4 5.500h15v6h7.500v14h-15v-9h-7.500z" fill="#0a0af0"/><circle cx="9.500" cy="10.500" r="3.300" fill="#e0e0e0"/><circle cx="18.500" cy="19.500" r="4.300" fill="#e0e0e0"/></svg></div>
<div class="tb t3" style="left:3px;top:328px"><div class="f"></div><svg viewBox="0 0 30 30"><path d="M5 22l13-13l7.500 13" stroke="#fe0404" stroke-width="2" fill="none"/><path d="M5 23h20" stroke="#0a0af0" stroke-width="2.600"/><path d="M16.500 20v-4.500M14.500 17.500l2-2l2 2" stroke="#000" stroke-width="1" fill="none"/></svg></div>
<div class="tb t3" style="left:43px;top:328px"><div class="f"></div><svg viewBox="0 0 30 30"><path d="M3 28.500l11-25l11.500 25" stroke="#fe0404" stroke-width="1.800" fill="none"/><path d="M5.500 28.500l8.500-10l9 10" stroke="#0a0af0" stroke-width="2.400" fill="none"/><path d="M14.500 16v-6.500M12 12l2.500-2.500l2.500 2.500" stroke="#000" stroke-width="1.200" fill="none"/></svg></div>
<div class="tb t3" style="left:83px;top:328px"><div class="f"></div><svg viewBox="0 0 30 30"><path d="M5 19l6-13h8l6 13" stroke="#fe0404" stroke-width="2.600" fill="none"/><path d="M1.500 28l3-8.500h21l3.500 8.500" stroke="#0a0af0" stroke-width="2.800" fill="none"/><path d="M14.500 16.500v-6.500M12 12.500l2.500-2.500l2.500 2.500" stroke="#000" stroke-width="1.200" fill="none"/></svg></div>
<div class="tb t3" style="left:123px;top:328px"><div class="f"></div><svg viewBox="0 0 30 30"><path d="M4 20l6.500-14h8l6.500 14" stroke="#fe0404" stroke-width="2.600" fill="none"/><path d="M0.500 20.500h29" stroke="#0a0af0" stroke-width="2.800" fill="none"/><path d="M14.500 16.500v-6.500M12 12.500l2.500-2.500l2.500 2.500" stroke="#000" stroke-width="1.200" fill="none"/><path d="M2 17.500l6 6M8 17.500l-6 6M22 17.500l6 6M28 17.500l-6 6" stroke="#000" stroke-width="1"/></svg></div>
<div class="tb t4" style="left:3px;top:368px"><div class="f"></div><svg viewBox="0 0 30 30"><path transform="translate(11 5.5) scale(1.1)" d="M0 0l8.500 8.500l-3.600 0.300l3.200 6.400l-2.300 1.100l-3.200-6.400l-2.600 2.600z" fill="#000"/></svg></div>
<div class="tb t4" style="left:43px;top:368px"><div class="f"></div><svg viewBox="0 0 30 30"><rect x="5" y="4" width="20" height="22" fill="none" stroke="#e03010" stroke-width="1.800"/><path transform="translate(11 5.5) scale(1.1)" d="M0 0l8.500 8.500l-3.600 0.300l3.200 6.400l-2.300 1.100l-3.200-6.400l-2.600 2.600z" fill="#000"/></svg></div>
<div class="tb t4" style="left:83px;top:368px"><div class="f"></div><svg viewBox="0 0 30 30"><path d="M11 5h14v20h-13l-6.500-6v-9z" fill="none" stroke="#e03010" stroke-width="1.800"/><path transform="translate(11.5 5.5) scale(1.1)" d="M0 0l8.500 8.500l-3.600 0.300l3.200 6.400l-2.300 1.100l-3.200-6.400l-2.600 2.600z" fill="#000"/></svg></div>
<div class="tb t4" style="left:123px;top:368px"><div class="f"></div><svg viewBox="0 0 30 30"><path d="M6 0v14.500M4.500 24h7.500v-9h4v-8.500h7" stroke="#000" stroke-width="1.200" fill="none"/><circle cx="6" cy="16" r="2.400" fill="#d02010"/><circle cx="4.500" cy="24" r="2.400" fill="#30d020" stroke="#105010" stroke-width=".5"/><circle cx="23.500" cy="6.500" r="2.400" fill="#30d020" stroke="#105010" stroke-width=".5"/><path transform="translate(19 11.5) scale(0.95)" d="M0 0l8.500 8.500l-3.600 0.300l3.200 6.400l-2.300 1.100l-3.200-6.400l-2.600 2.600z" fill="#000"/></svg></div>
<div class="a" style="left:0;top:406px;width:164px;height:2px;background:#8a8a8a"></div>
<div class="a" style="left:0;top:408px;width:164px;height:3px;background:#3a8a78"></div>
<div class="a" style="left:0;top:411px;width:164px;height:275px;background:#000;border-left:2px solid #3a8a78;border-right:2px solid #aeeee0"></div>
<svg class="a" style="left:0;top:411px" width="164" height="275" viewBox="1276 484 164 275"><path d="M1278.5 547.2H1438M1278.5 699.2H1438M1278.7 547V699" stroke="#4a8a28" stroke-width="1.2" fill="none"/><rect x="1286" y="608.8" width="131" height="87" fill="#fe0404"/><path d="M1285 553H1431V691H1417" stroke="#fff" stroke-width="2" fill="none"/><path d="M1285 552V609" stroke="#fff" stroke-width="2" fill="none"/><path d="M1285 608.8V691H1321V688.6H1327V691H1417" stroke="#3fe6f6" stroke-width="2" fill="none"/><path d="M1281.5 687.5l7 7M1288.5 687.5l-7 7" stroke="#fff" stroke-width="1"/></svg>
<div class="a" style="left:0;top:686px;width:164px;height:2px;background:#aeeee0"></div>
<div class="a" style="left:0;top:688px;width:164px;height:2px;background:#3a8a78"></div>
<div class="a mono" style="left:1px;top:690px;width:163px;height:42px;background:#55cbb0;border-left:2px solid #3f9c86;font-size:15px;line-height:15.2px;padding:6.5px 0 0 2.5px;box-shadow:inset 0 -2px 0 #aeeee0"><span class="sy">X = 2.258809"</span>
<span class="sy">Y = 5.776275"</span></div>
</div>
<div class="a" id="status">
<div class="a cream" style="left:95px;top:0;width:1264px;height:31.5px"></div>
<div class="a" style="left:1.5px;top:0;width:30.5px;height:31.5px;background:#ffffd0"><div class="a" style="left:3px;top:3px;right:3px;bottom:3px;border:1px solid #d0d09c"></div><svg class="a" style="left:5.5px;top:5.5px" width="20" height="20" viewBox="0 0 20 20"><rect x="0.750" y="0.750" width="18.500" height="18.500" stroke="#000" fill="none" stroke-width="1.500"/><path d="M4 4l11 11M4 4h4M4 4v4M15 15h-4M15 15v-4" stroke="#000" fill="none" stroke-width="1.200"/><path d="M3 17h14" stroke="#000" fill="none" stroke-width="1"/></svg></div>
<div class="a" style="left:34px;top:0;width:30.5px;height:31.5px;background:#ffffd0"><div class="a" style="left:3px;top:3px;right:3px;bottom:3px;border:1px solid #d0d09c"></div><svg class="a" style="left:5.5px;top:5.5px" width="20" height="20" viewBox="0 0 20 20"><rect x="0.750" y="0.750" width="18.500" height="18.500" stroke="#000" fill="none" stroke-width="1.500"/><path d="M3 16.500l13-13M3 16.500h14" stroke="#000" fill="none" stroke-width="1.300"/><text x="6" y="8.500" font-family="Liberation Sans, sans-serif" font-size="6.500" font-weight="bold" fill="#000">L</text><text x="10.500" y="16.300" font-family="Liberation Sans, DejaVu Sans, sans-serif" font-size="7.500" font-weight="bold" fill="#000">α</text></svg></div>
<div class="a" style="left:66px;top:0;width:28.5px;height:31.5px;background:#55cbb0"><div class="a" style="left:2.6px;top:3.2px;width:23.3px;height:25.8px;background:#ffffd0;border:2px solid;border-color:#ffffec #a39a6c #a39a6c #ffffec"><svg class="a" style="left:2px;top:2.5px" width="15" height="16" viewBox="0 0 15 16"><path d="M1 5l4-4h9v14h-13z" stroke="#000" fill="none" stroke-width="1.300"/><path d="M7.500 1v14M1 8h13" stroke="#000" fill="none" stroke-width="1.300"/></svg></div></div>
<div class="a mono" style="left:98px;top:9.300px;font-size:12.5px;letter-spacing:0"><span class="sy">X Y :</span></div>
<div class="a" style="left:143.5px;top:0;width:172px;height:31.5px;background:#ffffe0"></div>
<div class="a" style="left:146.5px;top:3px;width:166.5px;height:26.5px;background:#ffffd0;border:2px solid;border-color:#a4a474 #dcdcac #dcdcac #a4a474"></div>
<svg class="a" style="left:150px;top:4.500px" width="5" height="15.5" viewBox="0 0 5 18"><path d="M2.500 2v13" stroke="#000" stroke-width="1" stroke-dasharray="1 1"/><path d="M.5 0l2 2l2-2M.5 17l2-2l2 2" stroke="#000" stroke-width=".9" fill="none"/></svg>
<div class="a" style="left:317.5px;top:0;width:29px;height:31.5px;background:#55cbb0"><div class="a" style="left:2.6px;top:3.2px;width:23.8px;height:25.8px;background:#ffffd0;border:2px solid;border-color:#ffffec #a39a6c #a39a6c #ffffec"><svg class="a" style="left:1.7px;top:2.2px" width="16" height="16" viewBox="0 0 16 16"><rect x="0.750" y="0.750" width="14.500" height="14.500" stroke="#000" fill="none" stroke-width="1.500"/><text x="5.300" y="13.200" font-family="Liberation Sans, sans-serif" font-size="14" font-weight="bold" fill="#000">!</text></svg></div></div>
<div class="a" style="left:346.5px;top:0;width:1.500px;height:31.5px;background:#000"></div>
<div class="a mono" style="left:351.5px;top:9.500px;font-size:11.7px;line-height:14px"><span class="sy">&lt;M1&gt; - Select first area corner</span></div>
<div class="a" style="left:1359px;top:0;width:2px;height:31.5px;background:#000"></div>
<div class="a" style="left:1361px;top:0;width:79px;height:31.5px;background:#55cbb0"></div>
<div class="a mono" style="left:1366.5px;top:2.800px;width:69.5px;height:26px;background:#55cbb0;border:2px solid;border-color:#b6f6e6 #2f8c78 #2f8c78 #b6f6e6;font-size:15px;line-height:26.5px;padding-left:5.5px"><span class="sy">Inch</span><i class="a" style="left:48.5px;top:8.500px;width:12.5px;height:6.500px;background:#7ab4c0;border:1px solid;border-color:#d0f0f0 #3a7a8a #3a7a8a #d0f0f0"></i></div>
</div>
<div class="a" id="msg">
<div class="a" style="left:0;top:0;width:1440px;height:1px;background:#000"></div>
<div class="a" style="left:2px;top:3px;width:1436px;height:25px;background:#b2fcfc;border:1px solid;border-color:#2a6a60 #e8ffff #e8ffff #2a6a60;box-shadow:inset -1.5px -1.5px 0 #5aa8a0"></div>
</div>
<div class="a" id="task"><div class="a" style="left:0;top:2px;width:1440px;height:1px;background:#fff"></div>
<div class="tk" style="left:2px;width:50px;font-weight:bold"><b style="background:radial-gradient(circle at 40% 60%,#e02020 30%,#208020 31%,#208020 60%,#101010 61%);left:5px;width:16px"></b><span style="left:24px">开始</span></div>
<div class="tk" style="left:66.0px;width:53px"><b style="background:#e89820"></b><span>迁</span></div>
<div class="tk" style="left:122.5px;width:53px"><b style="background:#c87890"></b><span>d</span></div>
<div class="tk" style="left:179.0px;width:53px"><b style="background:#c87890"></b><span>d</span></div>
<div class="tk" style="left:235.5px;width:53px"><b style="background:#e8ecf8"></b><span>兴</span></div>
<div class="tk" style="left:292.0px;width:53px"><b style="background:#1848b0"></b><span>F</span></div>
<div class="tk" style="left:348.5px;width:53px"><b style="background:#30a0c0"></b><span>执</span></div>
<div class="tk" style="left:405.0px;width:53px"><b style="background:#203090"></b><span>F</span></div>
<div class="tk" style="left:461.5px;width:53px"><b style="background:#203090"></b><span>T</span></div>
<div class="tk" style="left:518.0px;width:53px"><b style="background:#203090"></b><span>T</span></div>
<div class="tk" style="left:574.5px;width:53px"><b style="background:#30a040"></b><span>M</span></div>
<div class="tk" style="left:631.0px;width:53px"><b style="background:#30a040"></b><span>M</span></div>
<div class="tk" style="left:687.5px;width:53px"><b style="background:#4060c0"></b><span>囲</span></div>
<div class="tk" style="left:744.0px;width:53px"><b style="background:#d02020"></b><span>A</span></div>
<div class="tk" style="left:800.5px;width:53px"><b style="background:#30a040"></b><span>G</span></div>
<div class="tk" style="left:857.0px;width:53px"><b style="background:#208030"></b><span>跳</span></div>
<div class="tk" style="left:913.5px;width:53px"><b style="background:#203090"></b><span>L</span></div>
<div class="tk" style="left:970.0px;width:53px"><b style="background:#203090"></b><span>L</span></div>
<div class="tk" style="left:1026.5px;width:53px;border-color:#404040 #fff #fff #404040;box-shadow:inset 1px 1px 0 #808080;background:#ecebe6"><b style="background:#203090"></b><span>P</span></div>
<div class="tk" style="left:1083.0px;width:53px"><b style="background:#203090"></b><span>F</span></div>
<div class="a" style="left:57px;top:5px;width:2px;height:12px;border-left:1px solid #808080;border-right:1px solid #fff"></div>
<div class="a" style="left:1162px;top:5px;width:2px;height:12px;border-left:1px solid #808080;border-right:1px solid #fff"></div>
<div class="a" style="left:1176px;top:7px;width:14px;height:8px;background:#3080d0;border-radius:6px 6px 0 0"></div>
<div class="a" style="left:1198px;top:7px;width:14px;height:8px;background:#3080d0;border-radius:6px 6px 0 0"></div>
<div class="a" style="left:1220px;top:7px;width:14px;height:8px;background:#d08020;border-radius:6px 6px 0 0"></div>
<div class="a" style="left:1242px;top:7px;width:14px;height:8px;background:#e0a030;border-radius:6px 6px 0 0"></div>
<div class="a" style="left:1271px;top:5px;width:169px;height:12px;border:1px solid;border-color:#808080 #fff #fff #808080"></div>
<div class="a" style="left:1279px;top:8px;width:12px;height:8px;background:#c0b020"></div>
<div class="a" style="left:1298px;top:8px;width:12px;height:8px;background:#901090"></div>
<div class="a" style="left:1317px;top:8px;width:12px;height:8px;background:#708030"></div>
<div class="a" style="left:1336px;top:8px;width:12px;height:8px;background:#101090"></div>
<div class="a" style="left:1355px;top:8px;width:12px;height:8px;background:#d02020"></div>
<div class="a" style="left:1374px;top:8px;width:12px;height:8px;background:#d03030"></div>
</div>
<div class="a" id="pop">
<div id="ptitle"><svg class="a" style="left:1px;top:1px" width="16" height="15" viewBox="0 0 16 15"><rect x="0" y="0" width="16" height="15" fill="#fffbe8" stroke="#404040" stroke-width="1"/><rect x="1" y="1" width="14" height="3" fill="#10107c"/><path d="M3 6l9 7M12 6l-9 7" stroke="#b4b414" stroke-width="2.4"/><path d="M3 6l9 7" stroke="#d8d838" stroke-width="1.2"/></svg><span>Popview - 1</span><div class="wb" style="left:575px;top:2px"><svg width="14" height="12" viewBox="0 0 14 12"><path d="M3.5 2.5l7 7M10.5 2.5l-7 7" stroke="#000" stroke-width="1.7"/></svg></div></div>
<div class="a" style="left:3px;top:21px;width:592.5px;height:1px;background:#cfe8e8"></div>
<div class="a" style="left:3px;top:22px;width:592.5px;height:317px;background:#000;border-top:3px solid #3a8070;border-left:3px solid #3a8070"></div>
<svg class="a" style="left:6px;top:25px" width="550" height="311" viewBox="433 299 550 311"><rect x="433" y="299" width="550" height="311" fill="#000"/><g fill="#fe0404"><circle cx="466.5" cy="417" r="79"/><circle cx="781.5" cy="417" r="79"/></g><g fill="none" stroke="#479a08" stroke-width="20"><path d="M420 331H465A78.3 78.3 0 0 1 465 487.6H420"/><path d="M990 331H780A78.3 78.3 0 0 0 780 487.6H990"/></g><clipPath id="cl"><circle cx="466.5" cy="417" r="79"/></clipPath><clipPath id="cr"><circle cx="781.5" cy="417" r="79"/></clipPath><g fill="none" stroke="#bb9a10" stroke-width="20"><path clip-path="url(#cl)" d="M420 331H465A78.3 78.3 0 0 1 465 487.6H420"/><path clip-path="url(#cr)" d="M990 331H780A78.3 78.3 0 0 0 780 487.6H990"/></g><g fill="#fe0404"><circle cx="625.3" cy="350.3" r="38.8"/><circle cx="625.3" cy="483.6" r="38.8"/></g></svg>
<div class="a" style="left:556px;top:22px;width:3px;height:317px;background:#c8f4ec"></div>
<div class="a" style="left:6px;top:336px;width:553px;height:3px;background:#c8f4ec"></div>
<div class="a" style="left:559px;top:22px;width:36.5px;height:317px;background:#000"></div>
<div class="a" style="left:560.5px;top:268.5px;width:34.5px;height:69.5px;background:#55cbb0"></div>
<div class="pb" style="top:24px"><div class="f"></div><svg viewBox="0 0 22 22"><rect x="3" y="7" width="10" height="10" stroke="#000" fill="none" stroke-width="2.300"/><rect x="14" y="3" width="5" height="5" stroke="#000" fill="none" stroke-width="1.300"/><path d="M13 11h3.500v-3" stroke="#000" fill="none" stroke-width="1.300"/><path d="M11 12h-5M6 12l2.500-2.200M6 12l2.500 2.200" stroke="#000" fill="none" stroke-width="1.400"/></svg></div>
<div class="pb" style="top:59px"><div class="f"></div><svg viewBox="0 0 22 22"><rect x="4.500" y="9" width="13.500" height="9" stroke="#000" fill="none" stroke-width="2.300"/><path d="M11 2l5 4.500h-2.200v6h-5.600v-6h-2.200z" fill="#000"/></svg></div>
<div class="pb" style="top:94px"><div class="f"></div><svg viewBox="0 0 22 22"><rect x="4.500" y="3.500" width="13.500" height="9.500" stroke="#000" fill="none" stroke-width="2.300"/><path d="M11 20l5-4.500h-2.200v-6h-5.600v6h-2.200z" fill="#000"/></svg></div>
<div class="pb" style="top:129px"><div class="f"></div><svg viewBox="0 0 22 22"><rect x="8" y="3.500" width="10" height="15" stroke="#000" fill="none" stroke-width="2.300"/><path d="M2.500 11l4.500-4.500v2.500h6v4h-6v2.500z" fill="#000"/></svg></div>
<div class="pb" style="top:164px"><div class="f"></div><svg viewBox="0 0 22 22"><rect x="4" y="3.500" width="10" height="15" stroke="#000" fill="none" stroke-width="2.300"/><path d="M19.500 11l-4.500-4.500v2.500h-6v4h6v2.500z" fill="#000"/></svg></div>
<div class="pb" style="top:199px"><div class="f"></div><svg viewBox="0 0 22 22"><rect x="8" y="8" width="6" height="6" stroke="#000" fill="none" stroke-width="1.900"/><path d="M8 1h6l-3 3zM8 21h6l-3-3zM1 8v6l3-3zM21 8v6l-3-3z" fill="#000"/><path d="M2 2l5 5M20 2l-5 5M2 20l5-5M20 20l-5-5" stroke="#000" stroke-width="1.200"/></svg></div>
<div class="pb" style="top:234px"><div class="f"></div><svg viewBox="0 0 22 22"><rect x="8.500" y="8.500" width="5" height="5" stroke="#000" fill="none" stroke-width="1.300"/><path d="M11 2l3.500 3.500h-7zM11 20l3.500-3.500h-7zM2 11l3.500-3.500v7zM20 11l-3.500-3.500v7z" fill="#000"/><path d="M7 6.500h8M7 15.500h8" stroke="#000" stroke-width="1"/></svg></div>
<div class="a" style="left:3px;top:339px;width:592.5px;height:29px;background:#55cbb0;border:1px solid #000"></div>
<div class="a mono" style="left:6px;top:342px;width:586.5px;height:23px;background:#9ddcdc;border:1.500px solid;border-color:#d6f6f6 #4f9494 #4f9494 #d6f6f6;font-size:15px;line-height:21.5px;text-align:center;font-weight:bold"><span class="sy">Close</span></div>
</div>
</body></html>
